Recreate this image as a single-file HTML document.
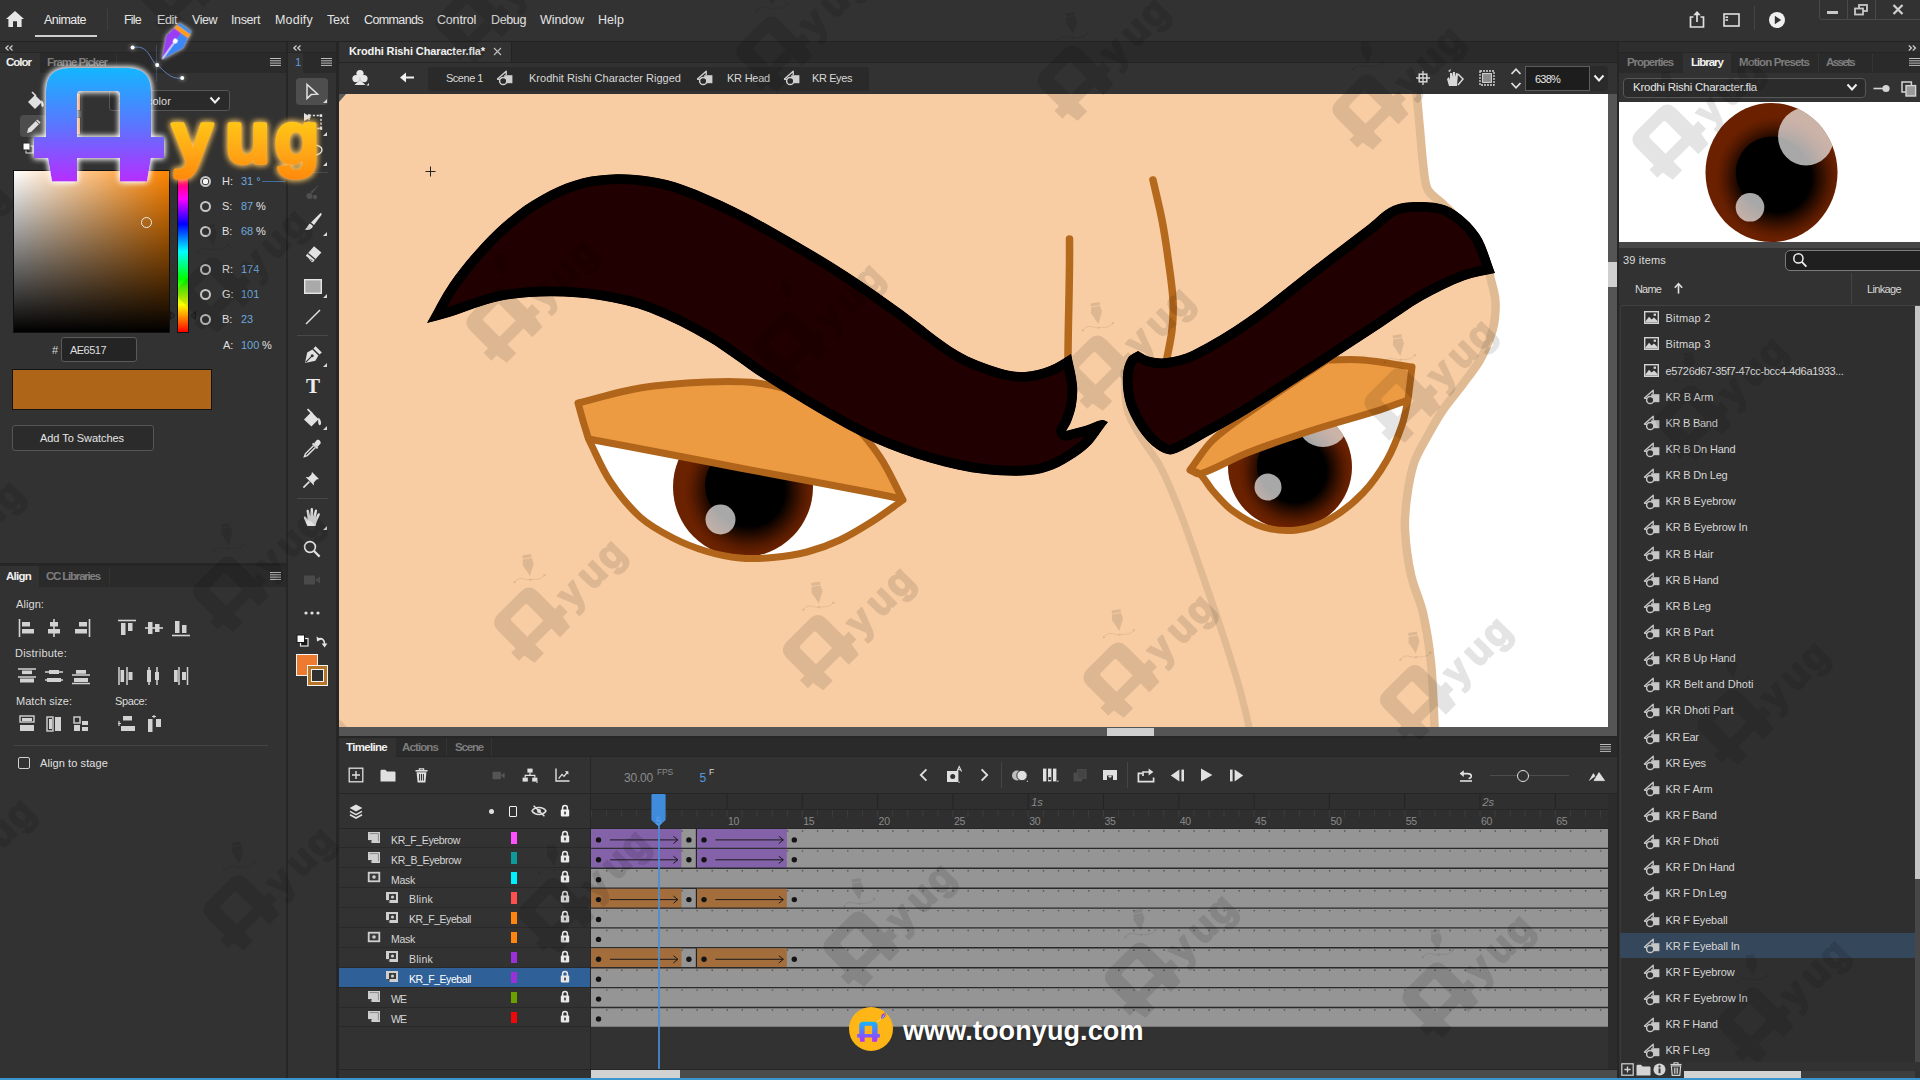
<!DOCTYPE html>
<html lang="en"><head><meta charset="utf-8"><title>Adobe Animate - Krodhi Rishi Character.fla</title>
<style>
html,body{margin:0;padding:0;background:#262626;overflow:hidden}
body{width:1920px;height:1080px;font-family:'Liberation Sans',sans-serif}
#app{position:relative;width:1920px;height:1080px;overflow:hidden;background:#262626}
.t{position:absolute;white-space:nowrap;font-family:'Liberation Sans',sans-serif;display:block}
body>span.t{position:static;display:inline}
.b{position:absolute;box-sizing:border-box}
svg{position:absolute;overflow:visible}
.ico{position:absolute}
</style>
</head>
<body>
<div id="app">
<div class="b" style="left:0;top:0;width:1920px;height:41px;background:#323232"></div>
<div class="b" style="left:0;top:41px;width:1920px;height:1px;background:#222"></div>
<svg class="ico" style="left:5px;top:10px" width="20" height="18" viewBox="0 0 20 18"><path d="M10 1 L19 9 L16.6 9 L16.6 17 L12 17 L12 11.2 L8 11.2 L8 17 L3.4 17 L3.4 9 L1 9 Z" fill="#e6e6e6"/></svg>
<span class="t" style="left:44.0px;top:13.8px;font-size:12.5px;line-height:12.5px;color:#ececec;letter-spacing:-0.551px;">Animate</span>
<div class="b" style="left:35px;top:35px;width:62px;height:2px;background:#cfcfcf"></div>
<div class="b" style="left:107px;top:9px;width:1px;height:21px;background:#3f3f3f"></div>
<span class="t" style="left:124.0px;top:13.8px;font-size:12.5px;line-height:12.5px;color:#e4e4e4;letter-spacing:-0.789px;">File</span>
<span class="t" style="left:157.0px;top:13.8px;font-size:12.5px;line-height:12.5px;color:#e4e4e4;letter-spacing:-0.387px;">Edit</span>
<span class="t" style="left:192.0px;top:13.8px;font-size:12.5px;line-height:12.5px;color:#e4e4e4;letter-spacing:-0.469px;">View</span>
<span class="t" style="left:231.0px;top:13.8px;font-size:12.5px;line-height:12.5px;color:#e4e4e4;letter-spacing:-0.378px;">Insert</span>
<span class="t" style="left:275.0px;top:13.8px;font-size:12.5px;line-height:12.5px;color:#e4e4e4;letter-spacing:0.195px;">Modify</span>
<span class="t" style="left:327.0px;top:13.8px;font-size:12.5px;line-height:12.5px;color:#e4e4e4;letter-spacing:-0.234px;">Text</span>
<span class="t" style="left:364.0px;top:13.8px;font-size:12.5px;line-height:12.5px;color:#e4e4e4;letter-spacing:-0.615px;">Commands</span>
<span class="t" style="left:437.0px;top:13.8px;font-size:12.5px;line-height:12.5px;color:#e4e4e4;letter-spacing:-0.185px;">Control</span>
<span class="t" style="left:491.0px;top:13.8px;font-size:12.5px;line-height:12.5px;color:#e4e4e4;letter-spacing:-0.369px;">Debug</span>
<span class="t" style="left:540.0px;top:13.8px;font-size:12.5px;line-height:12.5px;color:#e4e4e4;letter-spacing:-0.078px;">Window</span>
<span class="t" style="left:598.0px;top:13.8px;font-size:12.5px;line-height:12.5px;color:#e4e4e4;letter-spacing:0.070px;">Help</span>
<svg class="ico" style="left:1688px;top:9px" width="18" height="20" viewBox="0 0 18 20"><path d="M5.5 8 H2.5 V18 H15.5 V8 H12.5" fill="none" stroke="#e0e0e0" stroke-width="1.7"/><path d="M9 13 V3" stroke="#e0e0e0" stroke-width="1.7"/><path d="M5.2 6.2 L9 2 L12.8 6.2 Z" fill="#e0e0e0"/></svg>
<svg class="ico" style="left:1723px;top:13px" width="17" height="14" viewBox="0 0 17 14"><rect x="1" y="1" width="15" height="12" fill="none" stroke="#e0e0e0" stroke-width="1.6"/><rect x="2.5" y="3.4" width="2.6" height="1.6" fill="#e0e0e0"/><rect x="2.5" y="6.2" width="2.6" height="1.6" fill="#e0e0e0"/></svg>
<div class="b" style="left:1754px;top:6px;width:1px;height:24px;background:#444"></div>
<svg class="ico" style="left:1768px;top:11px" width="18" height="18" viewBox="0 0 18 18"><circle cx="9" cy="9" r="8" fill="#f0f0f0"/><path d="M6.8 4.8 L13.2 9 L6.8 13.2 Z" fill="#323232"/></svg>
<div class="b" style="left:1819px;top:-3px;width:104px;height:23px;border:1px solid #4a4a4a;border-radius:3px"></div>
<div class="b" style="left:1847px;top:0;width:1px;height:19px;background:#4a4a4a"></div>
<div class="b" style="left:1875px;top:0;width:1px;height:19px;background:#4a4a4a"></div>
<div class="b" style="left:1827px;top:11px;width:11px;height:3px;background:#c8c8c8"></div>
<svg class="ico" style="left:1854px;top:4px" width="14" height="12" viewBox="0 0 14 12"><rect x="5" y="1" width="8" height="6" fill="none" stroke="#c8c8c8" stroke-width="1.8"/><rect x="1" y="4.5" width="8" height="6" fill="#323232" stroke="#c8c8c8" stroke-width="1.8"/></svg>
<svg class="ico" style="left:1892px;top:4px" width="12" height="11" viewBox="0 0 12 11"><path d="M1.5 1 L10.5 10 M10.5 1 L1.5 10" stroke="#d0d0d0" stroke-width="2.2"/></svg>
<div class="b" style="left:339px;top:42px;width:1278px;height:21px;background:#2a2a2a"></div>
<div class="b" style="left:339px;top:42px;width:173px;height:21px;background:#323232;border-right:1px solid #222"></div>
<span class="t" style="left:349.0px;top:45.5px;font-size:11px;line-height:11px;color:#f2f2f2;font-weight:700;letter-spacing:-0.125px;">Krodhi Rishi Character.fla*</span>
<svg class="ico" style="left:493px;top:47px" width="9" height="9" viewBox="0 0 9 9"><path d="M1 1 L8 8 M8 1 L1 8" stroke="#c0c0c0" stroke-width="1.1"/></svg>
<div class="b" style="left:339px;top:62px;width:1278px;height:32px;background:#323232;border-top:1px solid #242424"></div>
<div class="b" style="left:428px;top:67px;width:441px;height:24px;background:#2a2a2a;border-radius:3px"></div>
<svg class="ico" style="left:351px;top:69px" width="20" height="18" viewBox="0 0 20 18"><circle cx="9" cy="4.6" r="3.6" fill="#e8e8e8"/><circle cx="5" cy="9.6" r="3.6" fill="#e8e8e8"/><circle cx="13" cy="9.6" r="3.6" fill="#e8e8e8"/><path d="M9 8 L9 13 M5.5 15.2 H12.5 L9 12 Z" stroke="#e8e8e8" stroke-width="1.6" fill="#e8e8e8"/><path d="M15.5 16.5 L18 16.5 L18 14 Z" fill="#e8e8e8"/></svg>
<svg class="ico" style="left:399px;top:71px" width="16" height="13" viewBox="0 0 16 13"><path d="M15 6.5 H5" stroke="#f0f0f0" stroke-width="2"/><path d="M1 6.5 L7 1.5 L7 11.5 Z" fill="#f0f0f0"/></svg>
<span class="t" style="left:446.0px;top:72.5px;font-size:11px;line-height:11px;color:#d8d8d8;letter-spacing:-0.482px;">Scene 1</span>
<svg class="ico" style="left:496px;top:70px" width="18" height="16" viewBox="0 0 18 16"><path d="M1.2 9.2 L10.2 1.2 L10.2 5" fill="none" stroke="#cfcfcf" stroke-width="1.4" stroke-linejoin="round"/><rect x="8.2" y="5.2" width="8.2" height="8" fill="#cfcfcf"/><circle cx="7.2" cy="11" r="3.6" fill="#2a2a2a" stroke="#cfcfcf" stroke-width="1.5"/><path d="M1.2 9.2 L4 9.4" stroke="#cfcfcf" stroke-width="1.4"/></svg>
<span class="t" style="left:529.0px;top:72.5px;font-size:11px;line-height:11px;color:#d8d8d8;letter-spacing:0.012px;">Krodhit Rishi Character Rigged</span>
<svg class="ico" style="left:696px;top:70px" width="18" height="16" viewBox="0 0 18 16"><path d="M1.2 9.2 L10.2 1.2 L10.2 5" fill="none" stroke="#cfcfcf" stroke-width="1.4" stroke-linejoin="round"/><rect x="8.2" y="5.2" width="8.2" height="8" fill="#cfcfcf"/><circle cx="7.2" cy="11" r="3.6" fill="#2a2a2a" stroke="#cfcfcf" stroke-width="1.5"/><path d="M1.2 9.2 L4 9.4" stroke="#cfcfcf" stroke-width="1.4"/></svg>
<span class="t" style="left:727.0px;top:72.5px;font-size:11px;line-height:11px;color:#d8d8d8;letter-spacing:-0.234px;">KR Head</span>
<svg class="ico" style="left:783px;top:70px" width="18" height="16" viewBox="0 0 18 16"><path d="M1.2 9.2 L10.2 1.2 L10.2 5" fill="none" stroke="#cfcfcf" stroke-width="1.4" stroke-linejoin="round"/><rect x="8.2" y="5.2" width="8.2" height="8" fill="#cfcfcf"/><circle cx="7.2" cy="11" r="3.6" fill="#2a2a2a" stroke="#cfcfcf" stroke-width="1.5"/><path d="M1.2 9.2 L4 9.4" stroke="#cfcfcf" stroke-width="1.4"/></svg>
<span class="t" style="left:812.0px;top:72.5px;font-size:11px;line-height:11px;color:#d8d8d8;letter-spacing:-0.400px;">KR Eyes</span>
<svg class="ico" style="left:1416px;top:71px" width="14" height="14" viewBox="0 0 14 14"><rect x="3.2" y="3.2" width="7.6" height="7.6" fill="none" stroke="#d8d8d8" stroke-width="1.5"/><path d="M7 0 V14 M0 7 H14" stroke="#d8d8d8" stroke-width="1.3"/></svg>
<svg class="ico" style="left:1445px;top:68px" width="20" height="20" viewBox="0 0 20 20"><path d="M4 18 L2 11 L4 9 L5 12 L5 5 L7 5 L7 9 L8 4 L10 4 L10 9 L11 5 L13 5.5 L12 18 Z" fill="#d8d8d8"/><path d="M13 6 L18 11 L13 17" fill="none" stroke="#d8d8d8" stroke-width="1.5"/><path d="M3 3 L6 1 L5 4 Z" fill="#d8d8d8"/></svg>
<svg class="ico" style="left:1479px;top:70px" width="16" height="16" viewBox="0 0 16 16"><rect x="1" y="1" width="14" height="14" fill="none" stroke="#d8d8d8" stroke-width="1.3" stroke-dasharray="2 1"/><rect x="3.6" y="3.6" width="8.8" height="8.8" fill="#8a8a8a" stroke="#d8d8d8" stroke-width="1"/></svg>
<svg class="ico" style="left:1509px;top:66px" width="14" height="25" viewBox="0 0 14 25"><path d="M2.5 8 L7 3.2 L11.5 8 M2.5 17 L7 21.8 L11.5 17" fill="none" stroke="#e0e0e0" stroke-width="1.8"/></svg>
<div class="b" style="left:1525px;top:66px;width:65px;height:25px;background:#1d1d1d;border:1px solid #5c5c5c"></div>
<span class="t" style="left:1535.0px;top:73.5px;font-size:11px;line-height:11px;color:#e8e8e8;letter-spacing:-0.785px;">638%</span>
<div class="b" style="left:1590px;top:66px;width:18px;height:25px;background:#2a2a2a;border-radius:0 4px 4px 0"></div>
<svg class="ico" style="left:1593px;top:74px" width="12" height="9" viewBox="0 0 12 9"><path d="M1.5 1.5 L6 6.5 L10.5 1.5" fill="none" stroke="#f0f0f0" stroke-width="2"/></svg>
<div class="b" style="left:1608px;top:94px;width:9px;height:642px;background:#555555"></div>
<div class="b" style="left:339px;top:727px;width:1278px;height:9px;background:#555555"></div>
<div class="b" style="left:1608px;top:262px;width:9px;height:25px;background:#cfcfcf"></div>
<div class="b" style="left:1107px;top:728px;width:47px;height:8px;background:#cfcfcf"></div><div class="b" style="left:0;top:42px;width:286px;height:1038px;background:#323232"></div>
<div class="b" style="left:0;top:42px;width:286px;height:11px;background:#2e2e2e;border-bottom:1px solid #262626"></div>
<svg class="ico" style="left:5px;top:45px" width="9" height="6" viewBox="0 0 9 6"><path d="M3.5 0.5 L0.8 3 L3.5 5.5 M7.5 0.5 L4.8 3 L7.5 5.5" fill="none" stroke="#d0d0d0" stroke-width="1.2"/></svg>
<div class="b" style="left:0;top:53px;width:286px;height:20px;background:#2a2a2a"></div>
<div class="b" style="left:0;top:53px;width:40px;height:20px;background:#323232"></div>
<div class="b" style="left:116px;top:54px;width:1px;height:18px;background:#333"></div>
<span class="t" style="left:6.0px;top:57.2px;font-size:11.5px;line-height:11.5px;color:#f0f0f0;font-weight:700;letter-spacing:-1.006px;">Color</span>
<span class="t" style="left:47.0px;top:57.2px;font-size:11.5px;line-height:11.5px;color:#7f7f7f;font-weight:700;letter-spacing:-1.021px;">Frame Picker</span>
<svg class="ico" style="left:270px;top:58px" width="11" height="8" viewBox="0 0 11 8"><path d="M0 0.5 H11 M0 2.8 H11 M0 5.1 H11 M0 7.4 H11" stroke="#bdbdbd" stroke-width="1"/></svg>
<svg class="ico" style="left:25px;top:91px" width="20" height="20" viewBox="0 0 20 20"><path d="M3 11 L10 4 L17 11 L10 18 Z" fill="#e0e0e0"/><path d="M7 1 L11 5" stroke="#e0e0e0" stroke-width="1.6"/><path d="M16.5 9 C19.5 12 19 16 17.6 16 C16 16 16 12 16.5 9Z" fill="#e0e0e0"/></svg>
<div class="b" style="left:20px;top:115px;width:27px;height:22px;background:#4d4d4d;border-radius:4px"></div>
<svg class="ico" style="left:25px;top:117px" width="18" height="18" viewBox="0 0 18 18"><path d="M2 16 L3.2 11.6 L12.4 2.4 L15.6 5.6 L6.4 14.8 Z" fill="#e0e0e0"/><path d="M11 3.8 L14.2 7" stroke="#4d4d4d" stroke-width="1"/></svg>
<svg class="ico" style="left:22px;top:142px" width="12" height="12" viewBox="0 0 12 12"><rect x="4" y="4" width="7" height="7" fill="#222" stroke="#ddd" stroke-width="1"/><rect x="1" y="1" width="7" height="7" fill="#fff" stroke="#222" stroke-width="1"/></svg>
<div class="b" style="left:57px;top:93px;width:24px;height:18px;background:#ee7a30;border:1px solid #111"></div>
<div class="b" style="left:57px;top:117px;width:24px;height:18px;background:#ee8a38;border:1px solid #111"></div>
<div class="b" style="left:109px;top:90px;width:121px;height:21px;background:#2a2a2a;border:1px solid #555;border-radius:3px"></div>
<span class="t" style="left:119.0px;top:95.5px;font-size:11px;line-height:11px;color:#dcdcdc;letter-spacing:0.058px;">Solid color</span>
<svg class="ico" style="left:209px;top:96px" width="12" height="9" viewBox="0 0 12 9"><path d="M1.5 1.5 L6 6.5 L10.5 1.5" fill="none" stroke="#f0f0f0" stroke-width="2"/></svg>
<div class="b" style="left:13px;top:170px;width:157px;height:163px;border:1px solid #111;background:linear-gradient(to top,#000 0%,rgba(0,0,0,0) 100%),linear-gradient(to right,#fff 0%,#ff8400 100%)"></div>
<div class="b" style="left:141px;top:217px;width:11px;height:11px;border:1.5px solid #ececec;border-radius:50%"></div>
<div class="b" style="left:177px;top:170px;width:12px;height:163px;border:1px solid #111;background:linear-gradient(to bottom,#f00 0%,#f0f 17%,#00f 33%,#0ff 50%,#0f0 67%,#ff0 83%,#f00 100%)"></div>
<svg class="ico" style="left:170px;top:311px" width="26" height="9" viewBox="0 0 26 9"><path d="M0.5 0.5 L5 4.5 L0.5 8.5 Z M25.5 0.5 L21 4.5 L25.5 8.5 Z" fill="#2a2a2a" stroke="#1a1a1a" stroke-width="1"/></svg>
<div class="b" style="left:200px;top:175.5px;width:11px;height:11px;border:2px solid #c6c6c6;border-radius:50%;background:radial-gradient(circle,#f4f4f4 0 2.6px,rgba(0,0,0,0) 3px)"></div>
<span class="t" style="left:222.0px;top:175.5px;font-size:11px;line-height:11px;color:#e0e0e0;">H:</span>
<span class="t" style="left:241.0px;top:175.5px;font-size:11px;line-height:11px;color:#6ea8dc;">31 °</span>
<div class="b" style="left:200px;top:201.0px;width:11px;height:11px;border:2px solid #c6c6c6;border-radius:50%"></div>
<span class="t" style="left:222.0px;top:201.0px;font-size:11px;line-height:11px;color:#e0e0e0;">S:</span>
<span class="t" style="left:241.0px;top:201.0px;font-size:11px;line-height:11px;color:#6ea8dc;">87</span>
<div class="b" style="left:200px;top:226.0px;width:11px;height:11px;border:2px solid #c6c6c6;border-radius:50%"></div>
<span class="t" style="left:222.0px;top:226.0px;font-size:11px;line-height:11px;color:#e0e0e0;">B:</span>
<span class="t" style="left:241.0px;top:226.0px;font-size:11px;line-height:11px;color:#6ea8dc;">68</span>
<div class="b" style="left:200px;top:263.5px;width:11px;height:11px;border:2px solid #c6c6c6;border-radius:50%"></div>
<span class="t" style="left:222.0px;top:263.5px;font-size:11px;line-height:11px;color:#e0e0e0;">R:</span>
<span class="t" style="left:241.0px;top:263.5px;font-size:11px;line-height:11px;color:#6ea8dc;">174</span>
<div class="b" style="left:200px;top:289.0px;width:11px;height:11px;border:2px solid #c6c6c6;border-radius:50%"></div>
<span class="t" style="left:222.0px;top:289.0px;font-size:11px;line-height:11px;color:#e0e0e0;">G:</span>
<span class="t" style="left:241.0px;top:289.0px;font-size:11px;line-height:11px;color:#6ea8dc;">101</span>
<div class="b" style="left:200px;top:314.0px;width:11px;height:11px;border:2px solid #c6c6c6;border-radius:50%"></div>
<span class="t" style="left:222.0px;top:314.0px;font-size:11px;line-height:11px;color:#e0e0e0;">B:</span>
<span class="t" style="left:241.0px;top:314.0px;font-size:11px;line-height:11px;color:#6ea8dc;">23</span>
<div class="b" style="left:262px;top:180.5px;width:23px;height:1px;background:#3f6ea0"></div>
<span class="t" style="left:256.0px;top:201.0px;font-size:11px;line-height:11px;color:#e0e0e0;">%</span>
<span class="t" style="left:256.0px;top:226.0px;font-size:11px;line-height:11px;color:#e0e0e0;">%</span>
<span class="t" style="left:223.0px;top:340.0px;font-size:11px;line-height:11px;color:#e0e0e0;">A:</span>
<span class="t" style="left:241.0px;top:340.0px;font-size:11px;line-height:11px;color:#6ea8dc;">100</span>
<span class="t" style="left:262.0px;top:340.0px;font-size:11px;line-height:11px;color:#e0e0e0;">%</span>
<span class="t" style="left:52.0px;top:344.5px;font-size:11px;line-height:11px;color:#d8d8d8;">#</span>
<div class="b" style="left:61px;top:337px;width:76px;height:25px;background:#242424;border:1px solid #5a5a5a;border-radius:3px"></div>
<span class="t" style="left:70.0px;top:344.5px;font-size:11px;line-height:11px;color:#dedede;letter-spacing:-0.526px;">AE6517</span>
<div class="b" style="left:12px;top:369px;width:200px;height:41px;background:#ae6517;border:1.5px solid #141414"></div>
<div class="b" style="left:12px;top:425px;width:142px;height:26px;background:#2b2b2b;border:1px solid #565656;border-radius:3px"></div>
<span class="t" style="left:40.0px;top:432.5px;font-size:11px;line-height:11px;color:#e4e4e4;letter-spacing:-0.053px;">Add To Swatches</span>
<div class="b" style="left:0;top:563px;width:286px;height:3px;background:#262626"></div>
<div class="b" style="left:0;top:566px;width:286px;height:21px;background:#2a2a2a"></div>
<div class="b" style="left:0;top:566px;width:39px;height:21px;background:#323232"></div>
<div class="b" style="left:109px;top:567px;width:1px;height:19px;background:#333"></div>
<span class="t" style="left:6.0px;top:571.2px;font-size:11.5px;line-height:11.5px;color:#f0f0f0;font-weight:700;letter-spacing:-0.750px;">Align</span>
<span class="t" style="left:46.0px;top:571.2px;font-size:11.5px;line-height:11.5px;color:#7f7f7f;font-weight:700;letter-spacing:-1.199px;">CC Libraries</span>
<svg class="ico" style="left:270px;top:572px" width="11" height="8" viewBox="0 0 11 8"><path d="M0 0.5 H11 M0 2.8 H11 M0 5.1 H11 M0 7.4 H11" stroke="#bdbdbd" stroke-width="1"/></svg>
<span class="t" style="left:16.0px;top:598.5px;font-size:11px;line-height:11px;color:#dcdcdc;letter-spacing:0.078px;">Align:</span>
<svg class="ico" style="left:18px;top:619px" width="18" height="18" viewBox="0 0 18 18"><path d="M1.5 0 V18" stroke="#d2d2d2" stroke-width="1.6"/><rect x="4" y="3" width="8" height="4.5" fill="#d2d2d2"/><rect x="4" y="10" width="12" height="4.5" fill="#d2d2d2"/></svg>
<svg class="ico" style="left:45px;top:619px" width="18" height="18" viewBox="0 0 18 18"><path d="M9 0 V18" stroke="#d2d2d2" stroke-width="1.6"/><rect x="5" y="3" width="8" height="4.5" fill="#d2d2d2"/><rect x="3" y="10" width="12" height="4.5" fill="#d2d2d2"/></svg>
<svg class="ico" style="left:73px;top:619px" width="18" height="18" viewBox="0 0 18 18"><path d="M16.5 0 V18" stroke="#d2d2d2" stroke-width="1.6"/><rect x="6" y="3" width="8" height="4.5" fill="#d2d2d2"/><rect x="2" y="10" width="12" height="4.5" fill="#d2d2d2"/></svg>
<svg class="ico" style="left:118px;top:619px" width="18" height="18" viewBox="0 0 18 18"><path d="M0 1.5 H18" stroke="#d2d2d2" stroke-width="1.6"/><rect x="3" y="4" width="4.5" height="12" fill="#d2d2d2"/><rect x="10" y="4" width="4.5" height="8" fill="#d2d2d2"/></svg>
<svg class="ico" style="left:145px;top:619px" width="18" height="18" viewBox="0 0 18 18"><path d="M0 9 H18" stroke="#d2d2d2" stroke-width="1.6"/><rect x="3" y="3" width="4.5" height="12" fill="#d2d2d2"/><rect x="10" y="5" width="4.5" height="8" fill="#d2d2d2"/></svg>
<svg class="ico" style="left:172px;top:619px" width="18" height="18" viewBox="0 0 18 18"><path d="M0 16.5 H18" stroke="#d2d2d2" stroke-width="1.6"/><rect x="3" y="2" width="4.5" height="12" fill="#d2d2d2"/><rect x="10" y="6" width="4.5" height="8" fill="#d2d2d2"/></svg>
<span class="t" style="left:15.0px;top:647.5px;font-size:11px;line-height:11px;color:#dcdcdc;letter-spacing:0.224px;">Distribute:</span>
<svg class="ico" style="left:18px;top:667px" width="18" height="18" viewBox="0 0 18 18"><path d="M0 2 H18 M0 10 H18" stroke="#d2d2d2" stroke-width="1.5"/><rect x="4" y="3.5" width="10" height="3.6" fill="#d2d2d2"/><rect x="2" y="11.5" width="14" height="4" fill="#d2d2d2"/></svg>
<svg class="ico" style="left:45px;top:667px" width="18" height="18" viewBox="0 0 18 18"><path d="M0 5 H18 M0 13 H18" stroke="#d2d2d2" stroke-width="1.5"/><rect x="4" y="3" width="10" height="4" fill="#d2d2d2"/><rect x="2" y="11" width="14" height="4" fill="#d2d2d2"/></svg>
<svg class="ico" style="left:72px;top:667px" width="18" height="18" viewBox="0 0 18 18"><path d="M0 8 H18 M0 16.5 H18" stroke="#d2d2d2" stroke-width="1.5"/><rect x="4" y="3" width="10" height="3.8" fill="#d2d2d2"/><rect x="2" y="11" width="14" height="4" fill="#d2d2d2"/></svg>
<svg class="ico" style="left:117px;top:667px" width="18" height="18" viewBox="0 0 18 18"><path d="M2 0 V18 M10 0 V18" stroke="#d2d2d2" stroke-width="1.5"/><rect x="3.5" y="3" width="3.6" height="12" fill="#d2d2d2"/><rect x="11.5" y="5" width="4" height="8" fill="#d2d2d2"/></svg>
<svg class="ico" style="left:144px;top:667px" width="18" height="18" viewBox="0 0 18 18"><path d="M5 0 V18 M13 0 V18" stroke="#d2d2d2" stroke-width="1.5"/><rect x="3" y="3" width="4" height="12" fill="#d2d2d2"/><rect x="11" y="5" width="4" height="8" fill="#d2d2d2"/></svg>
<svg class="ico" style="left:171px;top:667px" width="18" height="18" viewBox="0 0 18 18"><path d="M8 0 V18 M16.5 0 V18" stroke="#d2d2d2" stroke-width="1.5"/><rect x="3" y="3" width="3.8" height="12" fill="#d2d2d2"/><rect x="11" y="5" width="4" height="8" fill="#d2d2d2"/></svg>
<span class="t" style="left:16.0px;top:695.5px;font-size:11px;line-height:11px;color:#dcdcdc;letter-spacing:0.033px;">Match size:</span>
<span class="t" style="left:115.0px;top:695.5px;font-size:11px;line-height:11px;color:#dcdcdc;letter-spacing:-0.375px;">Space:</span>
<svg class="ico" style="left:18px;top:715px" width="18" height="18" viewBox="0 0 18 18"><rect x="2" y="1" width="14" height="6" fill="none" stroke="#d2d2d2" stroke-width="1.4"/><rect x="4" y="3" width="10" height="3" fill="#d2d2d2"/><rect x="2" y="10" width="14" height="6" fill="#d2d2d2"/></svg>
<svg class="ico" style="left:45px;top:715px" width="18" height="18" viewBox="0 0 18 18"><rect x="2" y="2" width="6" height="14" fill="none" stroke="#d2d2d2" stroke-width="1.4"/><rect x="4" y="4" width="3" height="10" fill="#d2d2d2"/><rect x="10" y="2" width="6" height="14" fill="#d2d2d2"/></svg>
<svg class="ico" style="left:72px;top:715px" width="18" height="18" viewBox="0 0 18 18"><rect x="2" y="2" width="6" height="6" fill="none" stroke="#d2d2d2" stroke-width="1.4"/><rect x="2" y="10" width="6" height="6" fill="#d2d2d2"/><rect x="10" y="6" width="6" height="4" fill="#d2d2d2"/><rect x="10" y="12" width="6" height="4" fill="#d2d2d2"/></svg>
<svg class="ico" style="left:118px;top:715px" width="18" height="18" viewBox="0 0 18 18"><rect x="5" y="1" width="9" height="4.5" fill="#d2d2d2"/><rect x="3" y="11" width="14" height="5" fill="#d2d2d2"/><path d="M1 6 V11 M0 8.5 H3" stroke="#d2d2d2" stroke-width="1.2"/></svg>
<svg class="ico" style="left:145px;top:715px" width="18" height="18" viewBox="0 0 18 18"><rect x="3" y="4" width="4.5" height="13" fill="#d2d2d2"/><rect x="11" y="4" width="5" height="8" fill="#d2d2d2"/><path d="M7 1.5 H11 M9 0 V3" stroke="#d2d2d2" stroke-width="1.2"/></svg>
<div class="b" style="left:14px;top:745px;width:254px;height:1px;background:#454545"></div>
<div class="b" style="left:18px;top:757px;width:12px;height:12px;border:1.5px solid #d0d0d0;border-radius:2px"></div>
<span class="t" style="left:40.0px;top:757.5px;font-size:11px;line-height:11px;color:#e0e0e0;letter-spacing:0.096px;">Align to stage</span><div class="b" style="left:288px;top:42px;width:48px;height:1038px;background:#323232"></div>
<div class="b" style="left:288px;top:42px;width:48px;height:11px;background:#2e2e2e;border-bottom:1px solid #262626"></div>
<svg class="ico" style="left:293px;top:45px" width="9" height="6" viewBox="0 0 9 6"><path d="M3.5 0.5 L0.8 3 L3.5 5.5 M7.5 0.5 L4.8 3 L7.5 5.5" fill="none" stroke="#d0d0d0" stroke-width="1.2"/></svg>
<div class="b" style="left:288px;top:53px;width:48px;height:20px;background:#2a2a2a"></div>
<div class="b" style="left:288px;top:53px;width:15px;height:20px;background:#323232"></div>
<span class="t" style="left:295.0px;top:57.2px;font-size:11.5px;line-height:11.5px;color:#5b9bd5;">1</span>
<svg class="ico" style="left:321px;top:58px" width="11" height="8" viewBox="0 0 11 8"><path d="M0 0.5 H11 M0 2.8 H11 M0 5.1 H11 M0 7.4 H11" stroke="#bdbdbd" stroke-width="1"/></svg>
<div class="b" style="left:296px;top:78px;width:32px;height:27px;background:#4e4e4e;border-radius:4px"></div>
<svg class="ico" style="left:304.0px;top:83.0px" width="16" height="18" viewBox="0 0 16 18"><path d="M3 1.5 L3 15.5 L7.2 11.6 L13.6 11.2 Z" fill="none" stroke="#e2e2e2" stroke-width="1.5" stroke-linejoin="miter"/></svg>
<svg class="ico" style="left:323px;top:99px" width="4" height="4" viewBox="0 0 4 4"><path d="M4 0 V4 H0 Z" fill="#d8d8d8"/></svg>
<svg class="ico" style="left:303.0px;top:112.0px" width="20" height="20" viewBox="0 0 20 20"><path d="M1 1 L1 9 L8 5.6 Z" fill="#e2e2e2"/><rect x="6" y="3.5" width="12" height="13" fill="none" stroke="#e2e2e2" stroke-width="1.3" stroke-dasharray="2.2 1.6"/><rect x="4.8" y="2.3" width="2.6" height="2.6" fill="#e2e2e2"/><rect x="16.6" y="2.3" width="2.6" height="2.6" fill="#e2e2e2"/><rect x="4.8" y="15.2" width="2.6" height="2.6" fill="#e2e2e2"/><rect x="16.6" y="15.2" width="2.6" height="2.6" fill="#e2e2e2"/></svg>
<svg class="ico" style="left:323px;top:132px" width="4" height="4" viewBox="0 0 4 4"><path d="M4 0 V4 H0 Z" fill="#d8d8d8"/></svg>
<svg class="ico" style="left:304.0px;top:143.0px" width="20" height="18" viewBox="0 0 20 18"><ellipse cx="10" cy="7" rx="8" ry="5" fill="none" stroke="#e2e2e2" stroke-width="1.4"/><path d="M5 11 C3 13 5 16 3 17" fill="none" stroke="#e2e2e2" stroke-width="1.4"/></svg>
<svg class="ico" style="left:323px;top:162px" width="4" height="4" viewBox="0 0 4 4"><path d="M4 0 V4 H0 Z" fill="#d8d8d8"/></svg>
<div class="b" style="left:297px;top:172px;width:31px;height:1px;background:#484848"></div>
<svg class="ico" style="left:304.0px;top:183.0px" width="18" height="18" viewBox="0 0 18 18"><path d="M15 1.5 L8 10.5 L6.5 9 Z" fill="#505050"/><circle cx="5.5" cy="13" r="3" fill="#505050"/><circle cx="11" cy="14" r="2.2" fill="#505050"/></svg>
<svg class="ico" style="left:303.0px;top:212.0px" width="20" height="20" viewBox="0 0 20 20"><path d="M17.5 1 C18.6 1 19 2 18.4 3 L11 13 L8 10.4 Z" fill="#e2e2e2"/><path d="M7 11.4 L10 14 C9 17.6 5 18.8 1.4 17.6 C4 16.6 4.4 13 7 11.4Z" fill="#e2e2e2"/></svg>
<svg class="ico" style="left:323px;top:232px" width="4" height="4" viewBox="0 0 4 4"><path d="M4 0 V4 H0 Z" fill="#d8d8d8"/></svg>
<svg class="ico" style="left:303.0px;top:245.0px" width="20" height="18" viewBox="0 0 20 18"><path d="M11 1.2 L18.4 7.4 L10.4 16.6 L3 10.4 Z" fill="#e2e2e2"/><path d="M5 8.4 L12.2 14.4" stroke="#323232" stroke-width="1.3"/><path d="M3 10.4 L5.6 12.6 L8.6 16.6 L10.4 16.6" fill="#323232" stroke="#e2e2e2" stroke-width="1"/></svg>
<svg class="ico" style="left:303.5px;top:278.5px" width="18" height="15" viewBox="0 0 18 15"><rect x="0.7" y="0.7" width="16.6" height="13.6" fill="#a9a9a9" stroke="#e4e4e4" stroke-width="1.4"/></svg>
<svg class="ico" style="left:323px;top:294px" width="4" height="4" viewBox="0 0 4 4"><path d="M4 0 V4 H0 Z" fill="#d8d8d8"/></svg>
<svg class="ico" style="left:305.0px;top:309.0px" width="16" height="16" viewBox="0 0 16 16"><path d="M1 15 L15 1" stroke="#e2e2e2" stroke-width="1.4"/></svg>
<div class="b" style="left:297px;top:335px;width:31px;height:1px;background:#484848"></div>
<svg class="ico" style="left:303.0px;top:345.0px" width="20" height="20" viewBox="0 0 20 20"><path d="M12.6 1.2 L18.8 7.4 L16.6 9.6 L10.4 3.4 Z" fill="#e2e2e2"/><path d="M9.4 4.6 L15.4 10.6 L12.4 15.8 L2 18 L4.2 7.6 Z" fill="#e2e2e2"/><path d="M2.6 17.4 L8.6 11.4" stroke="#323232" stroke-width="1.2"/><circle cx="9.2" cy="10.8" r="1.5" fill="#323232"/></svg>
<svg class="ico" style="left:323px;top:363px" width="4" height="4" viewBox="0 0 4 4"><path d="M4 0 V4 H0 Z" fill="#d8d8d8"/></svg>
<span class="t" style="left:306.0px;top:376.0px;font-size:21px;line-height:21px;color:#ececec;font-weight:700;font-family:'Liberation Serif',serif;">T</span>
<svg class="ico" style="left:301.0px;top:408.0px" width="22" height="20" viewBox="0 0 22 20"><path d="M3 11.5 L10.4 4 L17.6 11.2 L10.4 18.6 Z" fill="#e2e2e2"/><path d="M6.5 1.2 L11.6 6.2" stroke="#e2e2e2" stroke-width="1.7"/><path d="M17.4 9.6 C21 13 20.4 17.2 18.8 17.2 C17 17.2 16.8 13 17.4 9.6Z" fill="#e2e2e2"/></svg>
<svg class="ico" style="left:323px;top:426px" width="4" height="4" viewBox="0 0 4 4"><path d="M4 0 V4 H0 Z" fill="#d8d8d8"/></svg>
<svg class="ico" style="left:302.0px;top:439.0px" width="20" height="20" viewBox="0 0 20 20"><path d="M14.6 1.2 C16.6 -0.2 19.6 2.6 18.4 4.8 L15.4 8 L12 4.6 Z" fill="#e2e2e2"/><path d="M10.6 4.4 L15.6 9.4" stroke="#e2e2e2" stroke-width="1.8"/><path d="M11.6 6.6 L3.4 14.8 L2.4 17.6 L5.2 16.6 L13.4 8.4" fill="none" stroke="#e2e2e2" stroke-width="1.4"/></svg>
<svg class="ico" style="left:302.0px;top:471.0px" width="18" height="18" viewBox="0 0 18 18"><path d="M10 1 L17 8 L14.6 8.6 L11.8 11.4 L12 14.4 L3.6 6 L6.6 6.2 L9.4 3.4 Z" fill="#e2e2e2"/><path d="M7.4 10.6 L1.4 16.6" stroke="#e2e2e2" stroke-width="1.6"/></svg>
<div class="b" style="left:297px;top:498px;width:31px;height:1px;background:#484848"></div>
<svg class="ico" style="left:302.0px;top:507.0px" width="20" height="20" viewBox="0 0 20 20"><path d="M5.4 19 L2 11.4 C1.2 9.6 3.2 8.8 4.2 10.4 L5.6 12.6 L4.6 4.2 C4.4 2.4 6.6 2.2 7 4 L8.2 9.6 L8.6 2.4 C8.7 0.6 11 0.6 11 2.4 L11.2 9.6 L12.8 3.4 C13.2 1.8 15.4 2.4 15 4 L13.8 10.4 L15.8 6.8 C16.6 5.4 18.4 6.4 17.8 7.8 L14.4 15.6 L13.6 19 Z" fill="#e2e2e2"/></svg>
<svg class="ico" style="left:323px;top:526px" width="4" height="4" viewBox="0 0 4 4"><path d="M4 0 V4 H0 Z" fill="#d8d8d8"/></svg>
<svg class="ico" style="left:303.0px;top:540.0px" width="18" height="18" viewBox="0 0 18 18"><circle cx="7" cy="7" r="5.4" fill="none" stroke="#e2e2e2" stroke-width="1.6"/><path d="M11 11 L16.6 16.6" stroke="#e2e2e2" stroke-width="2.2"/></svg>
<svg class="ico" style="left:303.0px;top:574.0px" width="18" height="12" viewBox="0 0 18 12"><rect x="1" y="1.5" width="11" height="9" rx="1.2" fill="#4a4a4a"/><path d="M12 6 L17 2.4 V9.6 Z" fill="#4a4a4a"/></svg>
<svg class="ico" style="left:304.0px;top:611.0px" width="16" height="4" viewBox="0 0 16 4"><circle cx="2" cy="2" r="1.6" fill="#e2e2e2"/><circle cx="8" cy="2" r="1.6" fill="#e2e2e2"/><circle cx="14" cy="2" r="1.6" fill="#e2e2e2"/></svg>
<svg class="ico" style="left:296.0px;top:633.5px" width="13" height="13" viewBox="0 0 13 13"><rect x="4.5" y="4.5" width="7.5" height="7.5" fill="#1a1a1a" stroke="#e6e6e6" stroke-width="1.2"/><rect x="1" y="1" width="7.5" height="7.5" fill="#fff" stroke="#1a1a1a" stroke-width="1"/></svg>
<svg class="ico" style="left:315.5px;top:634.5px" width="12" height="13" viewBox="0 0 12 13"><path d="M2 4.2 C6 2.6 9 5 8.6 9.4" fill="none" stroke="#e2e2e2" stroke-width="1.6"/><path d="M0.6 1.4 L1 6.6 L5.2 4.4 Z" fill="#e2e2e2"/><path d="M5.6 8.6 L11.4 8.6 L8.6 12.6 Z" fill="#e2e2e2"/></svg>
<div class="b" style="left:296px;top:654px;width:22px;height:22px;background:#ee7a30;border:1px solid #f4f4f4"></div>
<div class="b" style="left:307px;top:665px;width:21px;height:21px;background:#b77528;border:1px solid #f4f4f4"></div>
<div class="b" style="left:311px;top:669px;width:13px;height:13px;background:#303030;border:1.5px solid #f4f4f4"></div>
<svg style="left:339px;top:94px;overflow:hidden" width="1269" height="633" viewBox="339 94 1269 633">
<defs>
<clipPath id="clb"><path d="M427.0 323.0C434.7 309.7 441.2 295.6 450.0 283.0C459.9 268.8 471.1 255.2 483.0 242.5C493.4 231.4 504.7 221.0 516.7 211.7C527.0 203.7 538.4 196.7 550.0 190.8C560.5 185.5 571.7 181.1 583.0 178.3C593.9 175.6 605.4 174.5 616.7 174.2C627.8 173.9 639.1 174.9 650.0 176.7C661.2 178.5 672.4 181.1 683.0 185.0C700.9 191.5 718.5 199.4 735.6 207.8C754.5 217.1 772.8 227.5 791.0 238.0C809.8 248.8 828.5 259.9 846.7 271.7C865.5 283.9 883.8 297.0 902.0 310.0C920.8 323.4 938.1 339.3 957.8 351.0C970.8 358.8 985.6 364.0 1000.0 368.5C1008.0 371.0 1016.7 372.4 1025.0 372.0C1033.4 371.6 1042.1 369.1 1050.0 366.0C1057.4 363.1 1064.0 358.0 1071.0 354.0C1073.0 364.3 1076.0 374.6 1077.0 385.0C1077.6 391.6 1077.1 398.5 1076.0 405.0C1075.1 410.8 1073.1 416.5 1071.0 422.0C1069.8 425.2 1067.7 428.0 1066.0 431.0C1072.3 429.3 1078.7 427.9 1085.0 426.0C1090.7 424.2 1096.3 421.0 1102.0 420.0C1104.0 419.7 1106.0 421.3 1108.0 422.0C1100.3 431.3 1094.4 442.8 1085.0 450.0C1072.4 459.8 1057.4 469.3 1042.0 473.0C1024.2 477.3 1004.2 475.7 985.6 474.0C966.9 472.2 948.2 467.6 930.0 462.5C911.1 457.1 892.3 450.5 874.4 442.5C855.3 434.0 837.1 423.4 819.0 413.0C800.0 402.1 781.4 390.5 763.0 378.6C744.3 366.5 727.0 352.2 707.8 341.0C689.3 330.2 670.0 320.1 650.0 312.5C634.0 306.4 616.9 302.7 600.0 300.0C583.6 297.3 566.7 296.2 550.0 296.3C533.3 296.4 516.3 297.5 500.0 300.8C483.0 304.3 466.7 311.6 450.0 316.7C442.4 319.0 434.7 320.9 427.0 323.0Z"/></clipPath>
<clipPath id="crb"><path d="M1138.0 351.0C1142.0 353.0 1145.7 356.0 1150.0 357.0C1155.4 358.3 1161.5 358.8 1167.0 358.0C1175.5 356.8 1184.3 354.8 1192.0 351.0C1211.0 341.5 1229.5 330.2 1247.0 318.0C1269.8 302.2 1291.0 283.9 1313.0 267.0C1331.3 252.9 1349.7 239.0 1368.0 225.0C1376.3 218.7 1383.7 209.9 1393.0 206.0C1402.0 202.2 1413.1 201.7 1423.0 202.0C1432.4 202.3 1443.0 203.4 1451.0 208.0C1461.7 214.1 1472.0 223.7 1479.0 234.0C1486.7 245.4 1489.7 260.0 1495.0 273.0C1485.0 275.3 1474.6 276.4 1465.0 280.0C1450.6 285.4 1436.5 292.4 1423.0 300.0C1408.8 308.0 1395.7 318.0 1382.0 327.0C1359.0 342.0 1336.1 357.1 1313.0 372.0C1291.1 386.1 1269.3 400.4 1247.0 414.0C1234.3 421.8 1221.1 428.9 1208.0 436.0C1196.5 442.2 1184.9 450.3 1173.0 454.0C1168.9 455.3 1163.8 453.1 1160.0 451.0C1154.4 447.8 1149.3 442.9 1145.0 438.0C1140.3 432.6 1136.3 426.3 1133.0 420.0C1129.7 413.7 1126.5 406.9 1125.0 400.0C1123.2 391.9 1122.4 383.2 1123.0 375.0C1123.4 369.2 1125.0 362.7 1128.0 358.0C1130.0 354.7 1134.7 353.3 1138.0 351.0Z"/></clipPath>
<clipPath id="cle"><path d="M578.0 403.0C598.7 398.0 619.1 391.4 640.0 388.0C662.1 384.4 684.6 383.0 707.0 382.0C723.6 381.3 740.6 380.9 757.0 383.0C771.6 384.9 786.5 388.3 800.0 394.0C817.5 401.3 835.2 410.4 850.0 422.0C861.9 431.4 871.4 444.4 880.0 457.0C889.1 470.4 895.3 485.7 903.0 500.0C893.0 507.0 883.3 514.5 873.0 521.0C862.3 527.8 851.4 534.6 840.0 540.0C829.4 545.0 818.3 549.1 807.0 552.0C795.9 554.9 784.4 556.5 773.0 557.5C762.1 558.5 750.9 559.0 740.0 558.0C728.9 557.0 717.7 554.7 707.0 551.5C695.4 548.0 683.8 543.6 673.0 538.0C661.5 532.1 649.6 525.6 640.0 517.0C628.6 506.6 618.6 494.0 610.0 481.0C601.4 468.0 595.7 453.0 588.5 439.0C586.7 433.0 584.8 427.0 583.0 421.0C581.3 415.0 579.7 409.0 578.0 403.0Z"/></clipPath>
<clipPath id="cre"><path d="M1190.0 470.0C1197.7 460.0 1203.9 448.5 1213.0 440.0C1227.2 426.8 1244.0 416.2 1260.0 405.0C1282.0 389.6 1304.7 375.0 1327.0 360.0C1339.0 360.0 1351.1 359.0 1363.0 360.0C1379.4 361.4 1395.7 364.7 1412.0 367.0C1410.7 378.0 1409.3 389.0 1408.0 400.0C1406.0 408.3 1404.8 416.9 1402.0 425.0C1397.8 436.9 1393.3 449.1 1387.0 460.0C1380.3 471.7 1372.4 483.3 1363.0 493.0C1353.4 503.0 1342.0 512.3 1330.0 519.0C1320.0 524.6 1308.3 528.7 1297.0 530.0C1285.9 531.3 1273.7 530.2 1263.0 527.0C1252.4 523.8 1242.1 517.6 1233.0 511.0C1225.4 505.6 1219.3 498.0 1213.0 491.0C1208.3 485.7 1205.1 478.7 1200.0 474.0C1197.4 471.7 1193.3 471.3 1190.0 470.0Z"/></clipPath>
<radialGradient id="iris" cx="0.5" cy="0.5" r="0.5">
<stop offset="0" stop-color="#000" stop-opacity="1"/><stop offset="0.55" stop-color="#000" stop-opacity="1"/>
<stop offset="0.76" stop-color="#0c0200" stop-opacity="0.5"/><stop offset="1" stop-color="#3a1000" stop-opacity="0"/></radialGradient>
<clipPath id="cil"><circle cx="743" cy="487" r="70"/></clipPath><clipPath id="cir"><circle cx="1290" cy="467" r="62"/></clipPath>
</defs>
<rect x="339" y="94" width="1269" height="633" fill="#ffffff"/>
<path d="M339 94 L1416 86C1417.3 100.7 1418.6 115.3 1420.0 130.0C1421.3 144.0 1422.1 158.1 1424.0 172.0C1424.8 178.1 1425.0 185.0 1428.0 190.0C1431.3 195.6 1438.2 199.2 1443.0 204.0C1452.2 213.2 1462.4 221.7 1470.0 232.0C1476.7 241.0 1481.5 251.7 1486.0 262.0C1488.5 267.7 1489.4 274.0 1491.0 280.0C1492.4 285.6 1494.1 291.3 1495.0 297.0C1495.6 301.3 1495.7 305.7 1495.5 310.0C1495.3 314.7 1494.9 319.4 1494.0 324.0C1493.1 328.7 1491.8 333.5 1490.0 338.0C1487.1 345.5 1484.1 353.1 1480.0 360.0C1475.1 368.4 1468.8 376.1 1463.0 384.0C1456.5 392.8 1449.1 401.0 1443.0 410.0C1437.1 418.6 1432.0 427.8 1427.0 437.0C1422.4 445.5 1417.0 453.9 1414.0 463.0C1410.4 473.9 1408.5 485.6 1407.0 497.0C1405.5 507.9 1404.4 519.0 1405.0 530.0C1405.8 545.0 1407.8 560.3 1411.0 575.0C1413.8 587.9 1420.1 600.1 1423.0 613.0C1426.7 629.4 1429.3 646.2 1431.0 663.0C1433.3 686.9 1433.7 711.0 1435.0 735.0L339 735 Z" fill="#f8cda4"/>
<path d="M1416 86C1417.3 100.7 1418.6 115.3 1420.0 130.0C1421.3 144.0 1422.1 158.1 1424.0 172.0C1424.8 178.1 1425.0 185.0 1428.0 190.0C1431.3 195.6 1438.2 199.2 1443.0 204.0C1452.2 213.2 1462.4 221.7 1470.0 232.0C1476.7 241.0 1481.5 251.7 1486.0 262.0C1488.5 267.7 1489.4 274.0 1491.0 280.0C1492.4 285.6 1494.1 291.3 1495.0 297.0C1495.6 301.3 1495.7 305.7 1495.5 310.0C1495.3 314.7 1494.9 319.4 1494.0 324.0C1493.1 328.7 1491.8 333.5 1490.0 338.0C1487.1 345.5 1484.1 353.1 1480.0 360.0C1475.1 368.4 1468.8 376.1 1463.0 384.0C1456.5 392.8 1449.1 401.0 1443.0 410.0C1437.1 418.6 1432.0 427.8 1427.0 437.0C1422.4 445.5 1417.0 453.9 1414.0 463.0C1410.4 473.9 1408.5 485.6 1407.0 497.0C1405.5 507.9 1404.4 519.0 1405.0 530.0C1405.8 545.0 1407.8 560.3 1411.0 575.0C1413.8 587.9 1420.1 600.1 1423.0 613.0C1426.7 629.4 1429.3 646.2 1431.0 663.0C1433.3 686.9 1433.7 711.0 1435.0 735.0" fill="none" stroke="#dfba93" stroke-width="8.5" stroke-linecap="round"/>
<path d="M1124 372C1125.0 384.7 1124.0 397.9 1127.0 410.0C1129.3 419.2 1135.1 427.7 1140.0 436.0C1146.1 446.3 1154.4 455.4 1160.0 466.0C1167.8 480.7 1173.9 496.4 1180.0 512.0C1187.2 530.4 1193.5 549.3 1200.0 568.0C1207.5 589.3 1215.0 610.6 1222.0 632.0C1228.3 651.2 1234.5 670.5 1240.0 690.0C1244.2 704.9 1247.3 720.0 1251.0 735.0" fill="none" stroke="#e0ba93" stroke-width="7" stroke-linecap="round"/>
<path d="M1069.5 239 C1070 280 1068 320 1068 360" fill="none" stroke="#b5691c" stroke-width="7.5" stroke-linecap="round"/>
<path d="M1153 180C1156.0 193.3 1159.4 206.6 1162.0 220.0C1164.4 232.6 1166.3 245.3 1168.0 258.0C1169.9 272.0 1172.2 286.0 1173.0 300.0C1173.6 310.0 1173.0 320.1 1172.0 330.0C1171.0 339.4 1168.7 348.7 1167.0 358.0" fill="none" stroke="#b5691c" stroke-width="7.5" stroke-linecap="round"/>
<!-- left eye -->
<path d="M578.0 403.0C598.7 398.0 619.1 391.4 640.0 388.0C662.1 384.4 684.6 383.0 707.0 382.0C723.6 381.3 740.6 380.9 757.0 383.0C771.6 384.9 786.5 388.3 800.0 394.0C817.5 401.3 835.2 410.4 850.0 422.0C861.9 431.4 871.4 444.4 880.0 457.0C889.1 470.4 895.3 485.7 903.0 500.0C893.0 507.0 883.3 514.5 873.0 521.0C862.3 527.8 851.4 534.6 840.0 540.0C829.4 545.0 818.3 549.1 807.0 552.0C795.9 554.9 784.4 556.5 773.0 557.5C762.1 558.5 750.9 559.0 740.0 558.0C728.9 557.0 717.7 554.7 707.0 551.5C695.4 548.0 683.8 543.6 673.0 538.0C661.5 532.1 649.6 525.6 640.0 517.0C628.6 506.6 618.6 494.0 610.0 481.0C601.4 468.0 595.7 453.0 588.5 439.0C586.7 433.0 584.8 427.0 583.0 421.0C581.3 415.0 579.7 409.0 578.0 403.0Z" fill="#ffffff"/>
<g clip-path="url(#cle)">
<circle cx="743" cy="487" r="70" fill="#6b2200"/>
<g clip-path="url(#cil)"><circle cx="749" cy="491" r="65" fill="url(#iris)"/>
<circle cx="743.5" cy="485" r="38.5" fill="#000"/>
<circle cx="777" cy="447" r="29" fill="#fff" fill-opacity="0.66"/>
<circle cx="720.5" cy="519.5" r="15" fill="#fff" fill-opacity="0.66"/></g>
</g>
<path d="M578.0 403.0C598.7 398.0 619.1 391.4 640.0 388.0C662.1 384.4 684.6 383.0 707.0 382.0C723.6 381.3 740.6 380.9 757.0 383.0C771.6 384.9 786.5 388.3 800.0 394.0C817.5 401.3 835.2 410.4 850.0 422.0C861.9 431.4 871.4 444.4 880.0 457.0C889.1 470.4 895.3 485.7 903.0 500.0C901.0 499.3 899.1 498.5 897.0 498.0C889.1 496.1 881.0 494.6 873.0 493.0C851.0 488.7 829.0 484.6 807.0 480.5C784.7 476.3 762.3 472.2 740.0 468.0C717.7 463.7 695.3 459.3 673.0 455.0C644.8 449.6 616.7 444.3 588.5 439.0C586.7 433.0 584.8 427.0 583.0 421.0C581.3 415.0 579.7 409.0 578.0 403.0Z" fill="#ec9b42"/>
<path d="M903 500C901.0 499.3 899.1 498.5 897.0 498.0C889.1 496.1 881.0 494.6 873.0 493.0C851.0 488.7 829.0 484.6 807.0 480.5C784.7 476.3 762.3 472.2 740.0 468.0C717.7 463.7 695.3 459.3 673.0 455.0C644.8 449.6 616.7 444.3 588.5 439.0" fill="none" stroke="#b0651a" stroke-width="7"/>
<path d="M578.0 403.0C598.7 398.0 619.1 391.4 640.0 388.0C662.1 384.4 684.6 383.0 707.0 382.0C723.6 381.3 740.6 380.9 757.0 383.0C771.6 384.9 786.5 388.3 800.0 394.0C817.5 401.3 835.2 410.4 850.0 422.0C861.9 431.4 871.4 444.4 880.0 457.0C889.1 470.4 895.3 485.7 903.0 500.0C893.0 507.0 883.3 514.5 873.0 521.0C862.3 527.8 851.4 534.6 840.0 540.0C829.4 545.0 818.3 549.1 807.0 552.0C795.9 554.9 784.4 556.5 773.0 557.5C762.1 558.5 750.9 559.0 740.0 558.0C728.9 557.0 717.7 554.7 707.0 551.5C695.4 548.0 683.8 543.6 673.0 538.0C661.5 532.1 649.6 525.6 640.0 517.0C628.6 506.6 618.6 494.0 610.0 481.0C601.4 468.0 595.7 453.0 588.5 439.0C586.7 433.0 584.8 427.0 583.0 421.0C581.3 415.0 579.7 409.0 578.0 403.0Z" fill="none" stroke="#b0651a" stroke-width="7" stroke-linejoin="round"/>
<!-- right eye -->
<path d="M1190.0 470.0C1197.7 460.0 1203.9 448.5 1213.0 440.0C1227.2 426.8 1244.0 416.2 1260.0 405.0C1282.0 389.6 1304.7 375.0 1327.0 360.0C1339.0 360.0 1351.1 359.0 1363.0 360.0C1379.4 361.4 1395.7 364.7 1412.0 367.0C1410.7 378.0 1409.3 389.0 1408.0 400.0C1406.0 408.3 1404.8 416.9 1402.0 425.0C1397.8 436.9 1393.3 449.1 1387.0 460.0C1380.3 471.7 1372.4 483.3 1363.0 493.0C1353.4 503.0 1342.0 512.3 1330.0 519.0C1320.0 524.6 1308.3 528.7 1297.0 530.0C1285.9 531.3 1273.7 530.2 1263.0 527.0C1252.4 523.8 1242.1 517.6 1233.0 511.0C1225.4 505.6 1219.3 498.0 1213.0 491.0C1208.3 485.7 1205.1 478.7 1200.0 474.0C1197.4 471.7 1193.3 471.3 1190.0 470.0Z" fill="#ffffff"/>
<g clip-path="url(#cre)">
<circle cx="1290" cy="467" r="62" fill="#6b2200"/>
<g clip-path="url(#cir)"><circle cx="1295" cy="471" r="57" fill="url(#iris)"/>
<circle cx="1290.5" cy="466" r="33.5" fill="#000"/>
<circle cx="1323" cy="421" r="26" fill="#fff" fill-opacity="0.66"/>
<circle cx="1268" cy="487" r="13.5" fill="#fff" fill-opacity="0.66"/></g>
</g>
<path d="M1190.0 470.0C1197.7 460.0 1203.9 448.5 1213.0 440.0C1227.2 426.8 1244.0 416.2 1260.0 405.0C1282.0 389.6 1304.7 375.0 1327.0 360.0C1339.0 360.0 1351.1 359.0 1363.0 360.0C1379.4 361.4 1395.7 364.7 1412.0 367.0C1410.7 378.0 1409.3 389.0 1408.0 400.0C1398.7 403.3 1389.4 407.0 1380.0 410.0C1357.8 417.0 1335.2 422.8 1313.0 430.0C1290.8 437.2 1268.7 444.6 1247.0 453.0C1231.0 459.2 1215.7 469.3 1200.0 474.0C1196.7 475.0 1193.3 471.3 1190.0 470.0Z" fill="#ec9b42"/>
<path d="M1408 400C1398.7 403.3 1389.4 407.0 1380.0 410.0C1357.8 417.0 1335.2 422.8 1313.0 430.0C1290.8 437.2 1268.7 444.6 1247.0 453.0C1231.0 459.2 1215.7 469.3 1200.0 474.0C1196.7 475.0 1193.3 471.3 1190.0 470.0" fill="none" stroke="#b0651a" stroke-width="7"/>
<path d="M1190.0 470.0C1197.7 460.0 1203.9 448.5 1213.0 440.0C1227.2 426.8 1244.0 416.2 1260.0 405.0C1282.0 389.6 1304.7 375.0 1327.0 360.0C1339.0 360.0 1351.1 359.0 1363.0 360.0C1379.4 361.4 1395.7 364.7 1412.0 367.0C1410.7 378.0 1409.3 389.0 1408.0 400.0C1406.0 408.3 1404.8 416.9 1402.0 425.0C1397.8 436.9 1393.3 449.1 1387.0 460.0C1380.3 471.7 1372.4 483.3 1363.0 493.0C1353.4 503.0 1342.0 512.3 1330.0 519.0C1320.0 524.6 1308.3 528.7 1297.0 530.0C1285.9 531.3 1273.7 530.2 1263.0 527.0C1252.4 523.8 1242.1 517.6 1233.0 511.0C1225.4 505.6 1219.3 498.0 1213.0 491.0C1208.3 485.7 1205.1 478.7 1200.0 474.0C1197.4 471.7 1193.3 471.3 1190.0 470.0Z" fill="none" stroke="#b0651a" stroke-width="7" stroke-linejoin="round"/>
<!-- brows -->
<path d="M427.0 323.0C434.7 309.7 441.2 295.6 450.0 283.0C459.9 268.8 471.1 255.2 483.0 242.5C493.4 231.4 504.7 221.0 516.7 211.7C527.0 203.7 538.4 196.7 550.0 190.8C560.5 185.5 571.7 181.1 583.0 178.3C593.9 175.6 605.4 174.5 616.7 174.2C627.8 173.9 639.1 174.9 650.0 176.7C661.2 178.5 672.4 181.1 683.0 185.0C700.9 191.5 718.5 199.4 735.6 207.8C754.5 217.1 772.8 227.5 791.0 238.0C809.8 248.8 828.5 259.9 846.7 271.7C865.5 283.9 883.8 297.0 902.0 310.0C920.8 323.4 938.1 339.3 957.8 351.0C970.8 358.8 985.6 364.0 1000.0 368.5C1008.0 371.0 1016.7 372.4 1025.0 372.0C1033.4 371.6 1042.1 369.1 1050.0 366.0C1057.4 363.1 1064.0 358.0 1071.0 354.0C1073.0 364.3 1076.0 374.6 1077.0 385.0C1077.6 391.6 1077.1 398.5 1076.0 405.0C1075.1 410.8 1073.1 416.5 1071.0 422.0C1069.8 425.2 1067.7 428.0 1066.0 431.0C1072.3 429.3 1078.7 427.9 1085.0 426.0C1090.7 424.2 1096.3 421.0 1102.0 420.0C1104.0 419.7 1106.0 421.3 1108.0 422.0C1100.3 431.3 1094.4 442.8 1085.0 450.0C1072.4 459.8 1057.4 469.3 1042.0 473.0C1024.2 477.3 1004.2 475.7 985.6 474.0C966.9 472.2 948.2 467.6 930.0 462.5C911.1 457.1 892.3 450.5 874.4 442.5C855.3 434.0 837.1 423.4 819.0 413.0C800.0 402.1 781.4 390.5 763.0 378.6C744.3 366.5 727.0 352.2 707.8 341.0C689.3 330.2 670.0 320.1 650.0 312.5C634.0 306.4 616.9 302.7 600.0 300.0C583.6 297.3 566.7 296.2 550.0 296.3C533.3 296.4 516.3 297.5 500.0 300.8C483.0 304.3 466.7 311.6 450.0 316.7C442.4 319.0 434.7 320.9 427.0 323.0Z" fill="#200000" stroke="#000" stroke-width="19.5" stroke-linejoin="round" clip-path="url(#clb)"/>
<path d="M1138.0 351.0C1142.0 353.0 1145.7 356.0 1150.0 357.0C1155.4 358.3 1161.5 358.8 1167.0 358.0C1175.5 356.8 1184.3 354.8 1192.0 351.0C1211.0 341.5 1229.5 330.2 1247.0 318.0C1269.8 302.2 1291.0 283.9 1313.0 267.0C1331.3 252.9 1349.7 239.0 1368.0 225.0C1376.3 218.7 1383.7 209.9 1393.0 206.0C1402.0 202.2 1413.1 201.7 1423.0 202.0C1432.4 202.3 1443.0 203.4 1451.0 208.0C1461.7 214.1 1472.0 223.7 1479.0 234.0C1486.7 245.4 1489.7 260.0 1495.0 273.0C1485.0 275.3 1474.6 276.4 1465.0 280.0C1450.6 285.4 1436.5 292.4 1423.0 300.0C1408.8 308.0 1395.7 318.0 1382.0 327.0C1359.0 342.0 1336.1 357.1 1313.0 372.0C1291.1 386.1 1269.3 400.4 1247.0 414.0C1234.3 421.8 1221.1 428.9 1208.0 436.0C1196.5 442.2 1184.9 450.3 1173.0 454.0C1168.9 455.3 1163.8 453.1 1160.0 451.0C1154.4 447.8 1149.3 442.9 1145.0 438.0C1140.3 432.6 1136.3 426.3 1133.0 420.0C1129.7 413.7 1126.5 406.9 1125.0 400.0C1123.2 391.9 1122.4 383.2 1123.0 375.0C1123.4 369.2 1125.0 362.7 1128.0 358.0C1130.0 354.7 1134.7 353.3 1138.0 351.0Z" fill="#200000" stroke="#000" stroke-width="19.5" stroke-linejoin="round" clip-path="url(#crb)"/>
<!-- registration cross -->
<path d="M425.5 171.5 H435.5 M430.5 166.5 V176.5" stroke="#222" stroke-width="1"/>
<path d="M339 94 L346 94 L339 102 Z" fill="#5a5a5a"/><path d="M339 727 L339 719 L347 727 Z" fill="#e0b78f"/>
</svg><div class="b" style="left:339px;top:738px;width:1278px;height:342px;background:#323232"></div>
<div class="b" style="left:339px;top:738px;width:1278px;height:19px;background:#2a2a2a;border-bottom:1px solid #262626"></div>
<div class="b" style="left:339px;top:738px;width:57px;height:19px;background:#323232"></div>
<div class="b" style="left:446px;top:738px;width:1px;height:18px;background:#343434"></div><div class="b" style="left:491px;top:738px;width:1px;height:18px;background:#343434"></div>
<span class="t" style="left:346.0px;top:741.8px;font-size:11.5px;line-height:11.5px;color:#f0f0f0;font-weight:700;letter-spacing:-0.682px;">Timeline</span>
<span class="t" style="left:402.0px;top:741.8px;font-size:11.5px;line-height:11.5px;color:#7d7d7d;font-weight:700;letter-spacing:-0.882px;">Actions</span>
<span class="t" style="left:455.0px;top:741.8px;font-size:11.5px;line-height:11.5px;color:#7d7d7d;font-weight:700;letter-spacing:-1.178px;">Scene</span>
<svg class="ico" style="left:1600px;top:744px" width="11" height="8" viewBox="0 0 11 8"><path d="M0 0.5 H11 M0 2.8 H11 M0 5.1 H11 M0 7.4 H11" stroke="#bdbdbd" stroke-width="1"/></svg>
<div class="b" style="left:339px;top:793px;width:1278px;height:1px;background:#262626"></div>
<div class="b" style="left:590px;top:757px;width:1px;height:313px;background:#262626"></div>
<svg class="ico" style="left:348.0px;top:767.0px" width="16" height="16" viewBox="0 0 16 16"><rect x="1.2" y="1.2" width="13.6" height="13.6" fill="none" stroke="#e0e0e0" stroke-width="1.3"/><path d="M8 4 V12 M4 8 H12" stroke="#e0e0e0" stroke-width="1.4"/></svg>
<svg class="ico" style="left:380.0px;top:768.5px" width="16" height="13" viewBox="0 0 16 13"><path d="M0.5 2.5 C0.5 1 1.2 0.8 2 0.8 H5.4 L7 2.6 H14 C15 2.6 15.5 3 15.5 4 V12.4 H0.5 Z" fill="#e0e0e0"/></svg>
<svg class="ico" style="left:414.5px;top:767.5px" width="13" height="15" viewBox="0 0 13 15"><path d="M0.5 2.8 H12.5" stroke="#e0e0e0" stroke-width="1.6"/><path d="M4.4 2 V0.8 H8.6 V2" fill="none" stroke="#e0e0e0" stroke-width="1.2"/><path d="M1.6 4.2 H11.4 L10.4 14.4 H2.6 Z" fill="#e0e0e0"/><path d="M4.6 6 V12.6 M6.5 6 V12.6 M8.4 6 V12.6" stroke="#323232" stroke-width="1"/></svg>
<svg class="ico" style="left:491.5px;top:770.5px" width="13" height="9" viewBox="0 0 13 9"><rect x="0.5" y="0.8" width="8.4" height="7.4" rx="1" fill="#555"/><path d="M8.6 4.5 L12.6 1.4 V7.6 Z" fill="#555"/></svg>
<svg class="ico" style="left:522.0px;top:767.5px" width="16" height="15" viewBox="0 0 16 15"><rect x="5.4" y="0.6" width="5.2" height="4" fill="#e0e0e0"/><rect x="0.6" y="9.6" width="5.2" height="4" fill="#e0e0e0"/><rect x="10.2" y="9.6" width="5.2" height="4" fill="#e0e0e0"/><path d="M8 4.6 V7.4 M3.2 9.6 V7.4 H12.8 V9.6" fill="none" stroke="#e0e0e0" stroke-width="1.2"/><path d="M13.8 14.8 L15.6 14.8 L15.6 13 Z" fill="#e0e0e0"/></svg>
<svg class="ico" style="left:554.5px;top:768.0px" width="15" height="14" viewBox="0 0 15 14"><path d="M1 0.5 V13 H14.5" fill="none" stroke="#e0e0e0" stroke-width="1.4"/><path d="M3.6 10.6 L7 6.4 L9 8.4 L12.6 4" fill="none" stroke="#e0e0e0" stroke-width="1.3"/><path d="M9.8 3.2 H13.4 V6.8 Z" fill="#e0e0e0"/></svg>
<span class="t" style="left:624.0px;top:771.5px;font-size:12px;line-height:12px;color:#8c8c8c;letter-spacing:-0.206px;">30.00</span>
<span class="t" style="left:657.0px;top:768.2px;font-size:8.5px;line-height:8.5px;color:#8c8c8c;letter-spacing:-0.177px;">FPS</span>
<span class="t" style="left:699.5px;top:771.5px;font-size:12px;line-height:12px;color:#4f9be0;">5</span>
<span class="t" style="left:709.0px;top:768.2px;font-size:8.5px;line-height:8.5px;color:#d8d8d8;">F</span>
<svg class="ico" style="left:918.5px;top:768.0px" width="9" height="14" viewBox="0 0 9 14"><path d="M7.4 1.4 L1.8 7 L7.4 12.6" fill="none" stroke="#e0e0e0" stroke-width="1.8"/></svg>
<svg class="ico" style="left:945.5px;top:765.5px" width="17" height="17" viewBox="0 0 17 17"><rect x="1" y="5" width="11.4" height="11" fill="#e0e0e0"/><circle cx="6.7" cy="10.5" r="2.5" fill="#323232"/><path d="M11 5.4 L13.2 0.6 L15.6 5.4 M11.8 3.8 H14.8" fill="none" stroke="#e0e0e0" stroke-width="1.1"/><path d="M12 16.8 L13.6 16.8 L13.6 15.2 Z" fill="#e0e0e0"/></svg>
<svg class="ico" style="left:979.5px;top:768.0px" width="9" height="14" viewBox="0 0 9 14"><path d="M1.6 1.4 L7.2 7 L1.6 12.6" fill="none" stroke="#e0e0e0" stroke-width="1.8"/></svg>
<div class="b" style="left:1001px;top:762px;width:1px;height:26px;background:#454545"></div>
<svg class="ico" style="left:1011.0px;top:768.5px" width="18" height="13" viewBox="0 0 18 13"><circle cx="6" cy="6.5" r="5" fill="#bdbdbd"/><circle cx="11" cy="6.5" r="5.2" fill="#e0e0e0" stroke="#323232" stroke-width="1"/><path d="M15.4 12.8 L17 12.8 L17 11.2 Z" fill="#e0e0e0"/></svg>
<svg class="ico" style="left:1041.5px;top:768.0px" width="17" height="14" viewBox="0 0 17 14"><rect x="1" y="0.6" width="3.4" height="12.8" fill="#e0e0e0"/><rect x="6" y="0.6" width="3.4" height="12.8" fill="#e0e0e0"/><rect x="11" y="0.6" width="3.4" height="12.8" fill="#e0e0e0"/><rect x="6.6" y="9" width="2.2" height="3" fill="#323232"/><path d="M14.6 13.8 L16.4 13.8 L16.4 12 Z" fill="#e0e0e0"/></svg>
<svg class="ico" style="left:1073.0px;top:768.5px" width="14" height="13" viewBox="0 0 14 13"><rect x="0.6" y="3.6" width="8.4" height="8.8" fill="#4c4c4c"/><rect x="4.6" y="0.6" width="8.4" height="8.8" fill="#444" stroke="#4c4c4c"/></svg>
<svg class="ico" style="left:1102.0px;top:769.0px" width="16" height="12" viewBox="0 0 16 12"><path d="M1 11 V1 H15 V11 H11 V6.4 H5 V11 Z" fill="#e0e0e0"/><path d="M6.4 7.6 H9.6 M8 6.4 V9.2" stroke="#e0e0e0" stroke-width="1"/></svg>
<div class="b" style="left:1127px;top:762px;width:1px;height:26px;background:#454545"></div>
<svg class="ico" style="left:1137.0px;top:767.5px" width="18" height="15" viewBox="0 0 18 15"><path d="M5 5.4 H1.4 V13.6 H16.6 V9.6" fill="none" stroke="#e0e0e0" stroke-width="1.7"/><path d="M6 8 V4 H12" fill="none" stroke="#e0e0e0" stroke-width="1.7"/><path d="M11.6 0.6 L16.4 4 L11.6 7.4 Z" fill="#e0e0e0"/></svg>
<svg class="ico" style="left:1169.5px;top:768.5px" width="15" height="13" viewBox="0 0 15 13"><path d="M9.4 0.6 V12.4 L0.8 6.5 Z" fill="#e0e0e0"/><rect x="11.4" y="0.6" width="2.6" height="11.8" fill="#e0e0e0"/></svg>
<svg class="ico" style="left:1200.0px;top:768.0px" width="13" height="14" viewBox="0 0 13 14"><path d="M1 0.6 L12.4 7 L1 13.4 Z" fill="#e0e0e0"/></svg>
<svg class="ico" style="left:1228.5px;top:768.5px" width="15" height="13" viewBox="0 0 15 13"><rect x="1" y="0.6" width="2.6" height="11.8" fill="#e0e0e0"/><path d="M5.6 0.6 V12.4 L14.2 6.5 Z" fill="#e0e0e0"/></svg>
<svg class="ico" style="left:1458.5px;top:768.5px" width="14" height="13" viewBox="0 0 14 13"><path d="M3 4.6 H8.6 C13.4 4.6 13.4 9.2 9.6 9.4" fill="none" stroke="#e0e0e0" stroke-width="1.6"/><path d="M0.6 4.6 L4.8 1.2 V8 Z" fill="#e0e0e0"/><path d="M1 12 H13" stroke="#e0e0e0" stroke-width="1.6"/></svg>
<div class="b" style="left:1490px;top:775px;width:79px;height:1px;background:#4c4c4c"></div>
<div class="b" style="left:1516.5px;top:769.5px;width:12px;height:12px;border:1.8px solid #e0e0e0;border-radius:50%;background:#323232"></div>
<svg class="ico" style="left:1588.5px;top:771.5px" width="16" height="9" viewBox="0 0 16 9"><path d="M0.4 8.6 L4.4 1.6 L6 4.4 M5 8.6 L10 0.6 L15.6 8.6 Z" fill="#e0e0e0" stroke="#e0e0e0" stroke-width="0.8"/></svg>
<div class="b" style="left:339px;top:828px;width:1278px;height:1px;background:#262626"></div>
<svg class="ico" style="left:349.0px;top:803.5px" width="14" height="15" viewBox="0 0 14 15"><path d="M7 0.6 L13.4 4 L7 7.4 L0.6 4 Z" fill="#e0e0e0"/><path d="M1 7.4 L7 10.6 L13 7.4 M1 10.8 L7 14 L13 10.8" fill="none" stroke="#e0e0e0" stroke-width="1.6"/></svg>
<div class="b" style="left:488.5px;top:808.5px;width:5px;height:5px;border-radius:50%;background:#e0e0e0"></div>
<div class="b" style="left:509px;top:805.5px;width:8px;height:11px;border:1.8px solid #f0f0f0;border-radius:1px"></div>
<svg class="ico" style="left:531.0px;top:805.0px" width="16" height="12" viewBox="0 0 16 12"><path d="M1 6 C4 1.4 12 1.4 15 6 C12 10.6 4 10.6 1 6Z" fill="none" stroke="#e0e0e0" stroke-width="1.4"/><circle cx="8" cy="6" r="2" fill="#e0e0e0"/><path d="M2.6 0.8 L13.4 11.2" stroke="#e0e0e0" stroke-width="1.5"/></svg>
<svg class="ico" style="left:560.0px;top:804.0px" width="10" height="13" viewBox="0 0 10 13"><path d="M2.6 6 V4 C2.6 0.6 7.4 0.6 7.4 4 V6" fill="none" stroke="#f0f0f0" stroke-width="1.5"/><rect x="0.8" y="5.6" width="8.4" height="6.8" rx="0.8" fill="#f0f0f0"/><rect x="4.2" y="7.6" width="1.6" height="2.8" fill="#323232"/></svg>
<div class="b" style="left:591px;top:794px;width:1026px;height:34px;background:#2f2f2f"></div>
<div class="b" style="left:591px;top:809px;width:1026px;height:1px;background:#262626"></div>
<svg class="ico" style="left:591px;top:794px;overflow:hidden" width="1025" height="34" viewBox="0 0 1025 34"><path d="M0.5 16 V23" stroke="#3c3c3c" stroke-width="1"/><path d="M15.6 16 V23" stroke="#3c3c3c" stroke-width="1"/><path d="M30.6 16 V23" stroke="#3c3c3c" stroke-width="1"/><path d="M45.7 16 V23" stroke="#3c3c3c" stroke-width="1"/><path d="M60.7 0 V15" stroke="#242424" stroke-width="1"/><path d="M60.7 16 V23" stroke="#3c3c3c" stroke-width="1"/><path d="M75.8 16 V23" stroke="#3c3c3c" stroke-width="1"/><path d="M90.9 16 V23" stroke="#3c3c3c" stroke-width="1"/><path d="M105.9 16 V23" stroke="#3c3c3c" stroke-width="1"/><path d="M121.0 16 V23" stroke="#3c3c3c" stroke-width="1"/><path d="M136.0 0 V15" stroke="#242424" stroke-width="1"/><path d="M136.0 16 V23" stroke="#3c3c3c" stroke-width="1"/><path d="M151.1 16 V23" stroke="#3c3c3c" stroke-width="1"/><path d="M166.2 16 V23" stroke="#3c3c3c" stroke-width="1"/><path d="M181.2 16 V23" stroke="#3c3c3c" stroke-width="1"/><path d="M196.3 16 V23" stroke="#3c3c3c" stroke-width="1"/><path d="M211.3 0 V15" stroke="#242424" stroke-width="1"/><path d="M211.3 16 V23" stroke="#3c3c3c" stroke-width="1"/><path d="M226.4 16 V23" stroke="#3c3c3c" stroke-width="1"/><path d="M241.5 16 V23" stroke="#3c3c3c" stroke-width="1"/><path d="M256.5 16 V23" stroke="#3c3c3c" stroke-width="1"/><path d="M271.6 16 V23" stroke="#3c3c3c" stroke-width="1"/><path d="M286.6 0 V15" stroke="#242424" stroke-width="1"/><path d="M286.6 16 V23" stroke="#3c3c3c" stroke-width="1"/><path d="M301.7 16 V23" stroke="#3c3c3c" stroke-width="1"/><path d="M316.8 16 V23" stroke="#3c3c3c" stroke-width="1"/><path d="M331.8 16 V23" stroke="#3c3c3c" stroke-width="1"/><path d="M346.9 16 V23" stroke="#3c3c3c" stroke-width="1"/><path d="M361.9 0 V15" stroke="#242424" stroke-width="1"/><path d="M361.9 16 V23" stroke="#3c3c3c" stroke-width="1"/><path d="M377.0 16 V23" stroke="#3c3c3c" stroke-width="1"/><path d="M392.1 16 V23" stroke="#3c3c3c" stroke-width="1"/><path d="M407.1 16 V23" stroke="#3c3c3c" stroke-width="1"/><path d="M422.2 16 V23" stroke="#3c3c3c" stroke-width="1"/><path d="M437.2 0 V15" stroke="#242424" stroke-width="1"/><path d="M437.2 16 V23" stroke="#3c3c3c" stroke-width="1"/><path d="M452.3 16 V23" stroke="#3c3c3c" stroke-width="1"/><path d="M467.4 16 V23" stroke="#3c3c3c" stroke-width="1"/><path d="M482.4 16 V23" stroke="#3c3c3c" stroke-width="1"/><path d="M497.5 16 V23" stroke="#3c3c3c" stroke-width="1"/><path d="M512.5 0 V15" stroke="#242424" stroke-width="1"/><path d="M512.5 16 V23" stroke="#3c3c3c" stroke-width="1"/><path d="M527.6 16 V23" stroke="#3c3c3c" stroke-width="1"/><path d="M542.7 16 V23" stroke="#3c3c3c" stroke-width="1"/><path d="M557.7 16 V23" stroke="#3c3c3c" stroke-width="1"/><path d="M572.8 16 V23" stroke="#3c3c3c" stroke-width="1"/><path d="M587.8 0 V15" stroke="#242424" stroke-width="1"/><path d="M587.8 16 V23" stroke="#3c3c3c" stroke-width="1"/><path d="M602.9 16 V23" stroke="#3c3c3c" stroke-width="1"/><path d="M618.0 16 V23" stroke="#3c3c3c" stroke-width="1"/><path d="M633.0 16 V23" stroke="#3c3c3c" stroke-width="1"/><path d="M648.1 16 V23" stroke="#3c3c3c" stroke-width="1"/><path d="M663.1 0 V15" stroke="#242424" stroke-width="1"/><path d="M663.1 16 V23" stroke="#3c3c3c" stroke-width="1"/><path d="M678.2 16 V23" stroke="#3c3c3c" stroke-width="1"/><path d="M693.3 16 V23" stroke="#3c3c3c" stroke-width="1"/><path d="M708.3 16 V23" stroke="#3c3c3c" stroke-width="1"/><path d="M723.4 16 V23" stroke="#3c3c3c" stroke-width="1"/><path d="M738.4 0 V15" stroke="#242424" stroke-width="1"/><path d="M738.4 16 V23" stroke="#3c3c3c" stroke-width="1"/><path d="M753.5 16 V23" stroke="#3c3c3c" stroke-width="1"/><path d="M768.6 16 V23" stroke="#3c3c3c" stroke-width="1"/><path d="M783.6 16 V23" stroke="#3c3c3c" stroke-width="1"/><path d="M798.7 16 V23" stroke="#3c3c3c" stroke-width="1"/><path d="M813.7 0 V15" stroke="#242424" stroke-width="1"/><path d="M813.7 16 V23" stroke="#3c3c3c" stroke-width="1"/><path d="M828.8 16 V23" stroke="#3c3c3c" stroke-width="1"/><path d="M843.9 16 V23" stroke="#3c3c3c" stroke-width="1"/><path d="M858.9 16 V23" stroke="#3c3c3c" stroke-width="1"/><path d="M874.0 16 V23" stroke="#3c3c3c" stroke-width="1"/><path d="M889.0 0 V15" stroke="#242424" stroke-width="1"/><path d="M889.0 16 V23" stroke="#3c3c3c" stroke-width="1"/><path d="M904.1 16 V23" stroke="#3c3c3c" stroke-width="1"/><path d="M919.2 16 V23" stroke="#3c3c3c" stroke-width="1"/><path d="M934.2 16 V23" stroke="#3c3c3c" stroke-width="1"/><path d="M949.3 16 V23" stroke="#3c3c3c" stroke-width="1"/><path d="M964.3 0 V15" stroke="#242424" stroke-width="1"/><path d="M964.3 16 V23" stroke="#3c3c3c" stroke-width="1"/><path d="M979.4 16 V23" stroke="#3c3c3c" stroke-width="1"/><path d="M994.5 16 V23" stroke="#3c3c3c" stroke-width="1"/><path d="M1009.5 16 V23" stroke="#3c3c3c" stroke-width="1"/></svg>
<span class="t" style="left:728.0px;top:816.2px;font-size:10.5px;line-height:10.5px;color:#8a8a8a;letter-spacing:-0.3px;">10</span>
<span class="t" style="left:803.3px;top:816.2px;font-size:10.5px;line-height:10.5px;color:#8a8a8a;letter-spacing:-0.3px;">15</span>
<span class="t" style="left:878.6px;top:816.2px;font-size:10.5px;line-height:10.5px;color:#8a8a8a;letter-spacing:-0.3px;">20</span>
<span class="t" style="left:953.9px;top:816.2px;font-size:10.5px;line-height:10.5px;color:#8a8a8a;letter-spacing:-0.3px;">25</span>
<span class="t" style="left:1029.2px;top:816.2px;font-size:10.5px;line-height:10.5px;color:#8a8a8a;letter-spacing:-0.3px;">30</span>
<span class="t" style="left:1104.5px;top:816.2px;font-size:10.5px;line-height:10.5px;color:#8a8a8a;letter-spacing:-0.3px;">35</span>
<span class="t" style="left:1179.8px;top:816.2px;font-size:10.5px;line-height:10.5px;color:#8a8a8a;letter-spacing:-0.3px;">40</span>
<span class="t" style="left:1255.1px;top:816.2px;font-size:10.5px;line-height:10.5px;color:#8a8a8a;letter-spacing:-0.3px;">45</span>
<span class="t" style="left:1330.4px;top:816.2px;font-size:10.5px;line-height:10.5px;color:#8a8a8a;letter-spacing:-0.3px;">50</span>
<span class="t" style="left:1405.7px;top:816.2px;font-size:10.5px;line-height:10.5px;color:#8a8a8a;letter-spacing:-0.3px;">55</span>
<span class="t" style="left:1481.0px;top:816.2px;font-size:10.5px;line-height:10.5px;color:#8a8a8a;letter-spacing:-0.3px;">60</span>
<span class="t" style="left:1556.3px;top:816.2px;font-size:10.5px;line-height:10.5px;color:#8a8a8a;letter-spacing:-0.3px;">65</span>
<span class="t" style="left:1031.2px;top:797.0px;font-size:11px;line-height:11px;color:#8a8a8a;font-style:italic;">1s</span>
<span class="t" style="left:1482.5px;top:797.0px;font-size:11px;line-height:11px;color:#8a8a8a;font-style:italic;">2s</span>
<div class="b" style="left:591px;top:828.5px;width:1017px;height:198.9px;background:#959595"></div>
<div class="b" style="left:339px;top:847.4px;width:251px;height:1px;background:#292929"></div>
<svg class="ico" style="left:367.0px;top:830.9px" width="14" height="13" viewBox="0 0 14 13"><path d="M1 1 H13 V12 H5 L1 8.5 Z" fill="#cfcfcf"/><path d="M1 8.5 H5 V12" fill="#323232" stroke="#cfcfcf" stroke-width="1"/><path d="M2.6 2.6 H11.4 V10.4" fill="none" stroke="#8a8a8a" stroke-width="1"/></svg>
<span class="t" style="left:391.0px;top:834.7px;font-size:10.5px;line-height:10.5px;color:#d6d6d6;letter-spacing:-0.378px;">KR_F_Eyebrow</span>
<div class="b" style="left:510.5px;top:832.4px;width:6.5px;height:11.5px;background:#ff4fff"></div>
<svg class="ico" style="left:560.0px;top:830.4px" width="10" height="13" viewBox="0 0 10 13"><path d="M2.6 6 V4 C2.6 0.6 7.4 0.6 7.4 4 V6" fill="none" stroke="#e8e8e8" stroke-width="1.5"/><rect x="0.8" y="5.6" width="8.4" height="6.8" rx="0.8" fill="#e8e8e8"/><rect x="4.2" y="7.6" width="1.6" height="2.8" fill="#323232"/></svg>
<div class="b" style="left:339px;top:867.3px;width:251px;height:1px;background:#292929"></div>
<svg class="ico" style="left:367.0px;top:850.8px" width="14" height="13" viewBox="0 0 14 13"><path d="M1 1 H13 V12 H5 L1 8.5 Z" fill="#cfcfcf"/><path d="M1 8.5 H5 V12" fill="#323232" stroke="#cfcfcf" stroke-width="1"/><path d="M2.6 2.6 H11.4 V10.4" fill="none" stroke="#8a8a8a" stroke-width="1"/></svg>
<span class="t" style="left:391.0px;top:854.6px;font-size:10.5px;line-height:10.5px;color:#d6d6d6;letter-spacing:-0.344px;">KR_B_Eyebrow</span>
<div class="b" style="left:510.5px;top:852.3px;width:6.5px;height:11.5px;background:#0e9a9a"></div>
<svg class="ico" style="left:560.0px;top:850.3px" width="10" height="13" viewBox="0 0 10 13"><path d="M2.6 6 V4 C2.6 0.6 7.4 0.6 7.4 4 V6" fill="none" stroke="#e8e8e8" stroke-width="1.5"/><rect x="0.8" y="5.6" width="8.4" height="6.8" rx="0.8" fill="#e8e8e8"/><rect x="4.2" y="7.6" width="1.6" height="2.8" fill="#323232"/></svg>
<div class="b" style="left:339px;top:887.2px;width:251px;height:1px;background:#292929"></div>
<svg class="ico" style="left:367.0px;top:871.2px" width="14" height="12" viewBox="0 0 14 12"><rect x="0.8" y="0.8" width="12.4" height="10.4" fill="#cfcfcf"/><rect x="2.6" y="2.6" width="8.8" height="6.8" fill="#3a3a3a"/><circle cx="7" cy="6" r="1.8" fill="#cfcfcf"/></svg>
<span class="t" style="left:391.0px;top:874.5px;font-size:10.5px;line-height:10.5px;color:#d6d6d6;letter-spacing:-0.273px;">Mask</span>
<div class="b" style="left:510.5px;top:872.2px;width:6.5px;height:11.5px;background:#00f0ff"></div>
<svg class="ico" style="left:560.0px;top:870.2px" width="10" height="13" viewBox="0 0 10 13"><path d="M2.6 6 V4 C2.6 0.6 7.4 0.6 7.4 4 V6" fill="none" stroke="#e8e8e8" stroke-width="1.5"/><rect x="0.8" y="5.6" width="8.4" height="6.8" rx="0.8" fill="#e8e8e8"/><rect x="4.2" y="7.6" width="1.6" height="2.8" fill="#323232"/></svg>
<div class="b" style="left:339px;top:907.1px;width:251px;height:1px;background:#292929"></div>
<svg class="ico" style="left:385.0px;top:890.6px" width="14" height="13" viewBox="0 0 14 13"><path d="M1 1 H13 V12 H5 L1 8.5 Z" fill="#cfcfcf"/><path d="M1 8.5 H5 V12" fill="#323232" stroke="#cfcfcf" stroke-width="1"/><rect x="4" y="3" width="7" height="6" fill="#3a3a3a"/><circle cx="7.5" cy="6" r="1.6" fill="#cfcfcf"/></svg>
<span class="t" style="left:409.0px;top:894.4px;font-size:10.5px;line-height:10.5px;color:#d6d6d6;letter-spacing:0.247px;">Blink</span>
<div class="b" style="left:510.5px;top:892.1px;width:6.5px;height:11.5px;background:#ff5050"></div>
<svg class="ico" style="left:560.0px;top:890.1px" width="10" height="13" viewBox="0 0 10 13"><path d="M2.6 6 V4 C2.6 0.6 7.4 0.6 7.4 4 V6" fill="none" stroke="#e8e8e8" stroke-width="1.5"/><rect x="0.8" y="5.6" width="8.4" height="6.8" rx="0.8" fill="#e8e8e8"/><rect x="4.2" y="7.6" width="1.6" height="2.8" fill="#323232"/></svg>
<div class="b" style="left:339px;top:926.9px;width:251px;height:1px;background:#292929"></div>
<svg class="ico" style="left:385.0px;top:910.5px" width="14" height="13" viewBox="0 0 14 13"><path d="M1 1 H13 V12 H5 L1 8.5 Z" fill="#cfcfcf"/><path d="M1 8.5 H5 V12" fill="#323232" stroke="#cfcfcf" stroke-width="1"/><rect x="4" y="3" width="7" height="6" fill="#3a3a3a"/><circle cx="7.5" cy="6" r="1.6" fill="#cfcfcf"/></svg>
<span class="t" style="left:409.0px;top:914.3px;font-size:10.5px;line-height:10.5px;color:#d6d6d6;letter-spacing:-0.427px;">KR_F_Eyeball</span>
<div class="b" style="left:510.5px;top:912.0px;width:6.5px;height:11.5px;background:#ff8410"></div>
<svg class="ico" style="left:560.0px;top:910.0px" width="10" height="13" viewBox="0 0 10 13"><path d="M2.6 6 V4 C2.6 0.6 7.4 0.6 7.4 4 V6" fill="none" stroke="#e8e8e8" stroke-width="1.5"/><rect x="0.8" y="5.6" width="8.4" height="6.8" rx="0.8" fill="#e8e8e8"/><rect x="4.2" y="7.6" width="1.6" height="2.8" fill="#323232"/></svg>
<div class="b" style="left:339px;top:946.8px;width:251px;height:1px;background:#292929"></div>
<svg class="ico" style="left:367.0px;top:930.9px" width="14" height="12" viewBox="0 0 14 12"><rect x="0.8" y="0.8" width="12.4" height="10.4" fill="#cfcfcf"/><rect x="2.6" y="2.6" width="8.8" height="6.8" fill="#3a3a3a"/><circle cx="7" cy="6" r="1.8" fill="#cfcfcf"/></svg>
<span class="t" style="left:391.0px;top:934.1px;font-size:10.5px;line-height:10.5px;color:#d6d6d6;letter-spacing:-0.273px;">Mask</span>
<div class="b" style="left:510.5px;top:931.9px;width:6.5px;height:11.5px;background:#ff8410"></div>
<svg class="ico" style="left:560.0px;top:929.9px" width="10" height="13" viewBox="0 0 10 13"><path d="M2.6 6 V4 C2.6 0.6 7.4 0.6 7.4 4 V6" fill="none" stroke="#e8e8e8" stroke-width="1.5"/><rect x="0.8" y="5.6" width="8.4" height="6.8" rx="0.8" fill="#e8e8e8"/><rect x="4.2" y="7.6" width="1.6" height="2.8" fill="#323232"/></svg>
<div class="b" style="left:339px;top:966.7px;width:251px;height:1px;background:#292929"></div>
<svg class="ico" style="left:385.0px;top:950.3px" width="14" height="13" viewBox="0 0 14 13"><path d="M1 1 H13 V12 H5 L1 8.5 Z" fill="#cfcfcf"/><path d="M1 8.5 H5 V12" fill="#323232" stroke="#cfcfcf" stroke-width="1"/><rect x="4" y="3" width="7" height="6" fill="#3a3a3a"/><circle cx="7.5" cy="6" r="1.6" fill="#cfcfcf"/></svg>
<span class="t" style="left:409.0px;top:954.0px;font-size:10.5px;line-height:10.5px;color:#d6d6d6;letter-spacing:0.247px;">Blink</span>
<div class="b" style="left:510.5px;top:951.8px;width:6.5px;height:11.5px;background:#9b30d8"></div>
<svg class="ico" style="left:560.0px;top:949.8px" width="10" height="13" viewBox="0 0 10 13"><path d="M2.6 6 V4 C2.6 0.6 7.4 0.6 7.4 4 V6" fill="none" stroke="#e8e8e8" stroke-width="1.5"/><rect x="0.8" y="5.6" width="8.4" height="6.8" rx="0.8" fill="#e8e8e8"/><rect x="4.2" y="7.6" width="1.6" height="2.8" fill="#323232"/></svg>
<div class="b" style="left:339px;top:967.7px;width:251px;height:19.9px;background:#2f6198"></div>
<div class="b" style="left:339px;top:986.6px;width:251px;height:1px;background:#292929"></div>
<svg class="ico" style="left:385.0px;top:970.2px" width="14" height="13" viewBox="0 0 14 13"><path d="M1 1 H13 V12 H5 L1 8.5 Z" fill="#cfcfcf"/><path d="M1 8.5 H5 V12" fill="#323232" stroke="#cfcfcf" stroke-width="1"/><rect x="4" y="3" width="7" height="6" fill="#3a3a3a"/><circle cx="7.5" cy="6" r="1.6" fill="#cfcfcf"/></svg>
<span class="t" style="left:409.0px;top:973.9px;font-size:10.5px;line-height:10.5px;color:#ffffff;letter-spacing:-0.427px;">KR_F_Eyeball</span>
<div class="b" style="left:510.5px;top:971.7px;width:6.5px;height:11.5px;background:#9b30d8"></div>
<svg class="ico" style="left:560.0px;top:969.7px" width="10" height="13" viewBox="0 0 10 13"><path d="M2.6 6 V4 C2.6 0.6 7.4 0.6 7.4 4 V6" fill="none" stroke="#e8e8e8" stroke-width="1.5"/><rect x="0.8" y="5.6" width="8.4" height="6.8" rx="0.8" fill="#e8e8e8"/><rect x="4.2" y="7.6" width="1.6" height="2.8" fill="#323232"/></svg>
<div class="b" style="left:339px;top:1006.5px;width:251px;height:1px;background:#292929"></div>
<svg class="ico" style="left:367.0px;top:990.1px" width="14" height="13" viewBox="0 0 14 13"><path d="M1 1 H13 V12 H5 L1 8.5 Z" fill="#cfcfcf"/><path d="M1 8.5 H5 V12" fill="#323232" stroke="#cfcfcf" stroke-width="1"/><path d="M2.6 2.6 H11.4 V10.4" fill="none" stroke="#8a8a8a" stroke-width="1"/></svg>
<span class="t" style="left:391.0px;top:993.8px;font-size:10.5px;line-height:10.5px;color:#d6d6d6;letter-spacing:-0.961px;">WE</span>
<div class="b" style="left:510.5px;top:991.6px;width:6.5px;height:11.5px;background:#6aa000"></div>
<svg class="ico" style="left:560.0px;top:989.6px" width="10" height="13" viewBox="0 0 10 13"><path d="M2.6 6 V4 C2.6 0.6 7.4 0.6 7.4 4 V6" fill="none" stroke="#e8e8e8" stroke-width="1.5"/><rect x="0.8" y="5.6" width="8.4" height="6.8" rx="0.8" fill="#e8e8e8"/><rect x="4.2" y="7.6" width="1.6" height="2.8" fill="#323232"/></svg>
<div class="b" style="left:339px;top:1026.4px;width:251px;height:1px;background:#292929"></div>
<svg class="ico" style="left:367.0px;top:1010.0px" width="14" height="13" viewBox="0 0 14 13"><path d="M1 1 H13 V12 H5 L1 8.5 Z" fill="#cfcfcf"/><path d="M1 8.5 H5 V12" fill="#323232" stroke="#cfcfcf" stroke-width="1"/><path d="M2.6 2.6 H11.4 V10.4" fill="none" stroke="#8a8a8a" stroke-width="1"/></svg>
<span class="t" style="left:391.0px;top:1013.7px;font-size:10.5px;line-height:10.5px;color:#d6d6d6;letter-spacing:-0.961px;">WE</span>
<div class="b" style="left:510.5px;top:1011.5px;width:6.5px;height:11.5px;background:#f00808"></div>
<svg class="ico" style="left:560.0px;top:1009.5px" width="10" height="13" viewBox="0 0 10 13"><path d="M2.6 6 V4 C2.6 0.6 7.4 0.6 7.4 4 V6" fill="none" stroke="#e8e8e8" stroke-width="1.5"/><rect x="0.8" y="5.6" width="8.4" height="6.8" rx="0.8" fill="#e8e8e8"/><rect x="4.2" y="7.6" width="1.6" height="2.8" fill="#323232"/></svg>
<svg class="ico" style="left:591px;top:828.5px;overflow:hidden" width="1017" height="198.9" viewBox="0 0 1017 198.9"><path d="M15.06 2.0 H1017" stroke="#555" stroke-width="1.4" stroke-dasharray="1.4 13.66"/><rect x="0" y="0.0" width="90.4" height="19.9" fill="#8362a9"/><rect x="105.4" y="0.0" width="90.4" height="19.9" fill="#8362a9"/><path d="M105.4 0.0 v19.9" stroke="#222" stroke-width="1.2"/><path d="M19.0 10.9 H86.9 M82.4 7.3 L86.9 10.9 L82.4 14.5" fill="none" stroke="#1a1a1a" stroke-width="1"/><path d="M124.4 10.9 H192.3 M187.8 7.3 L192.3 10.9 L187.8 14.5" fill="none" stroke="#1a1a1a" stroke-width="1"/><circle cx="7.5" cy="10.9" r="2.7" fill="#141414"/><circle cx="97.9" cy="10.9" r="2.7" fill="#141414"/><circle cx="113.0" cy="10.9" r="2.7" fill="#141414"/><circle cx="203.3" cy="10.9" r="2.7" fill="#141414"/><path d="M0 19.4 H1017" stroke="#2a2a2a" stroke-width="1.4"/><path d="M15.06 21.9 H1017" stroke="#555" stroke-width="1.4" stroke-dasharray="1.4 13.66"/><rect x="0" y="19.9" width="90.4" height="19.9" fill="#8362a9"/><rect x="105.4" y="19.9" width="90.4" height="19.9" fill="#8362a9"/><path d="M105.4 19.9 v19.9" stroke="#222" stroke-width="1.2"/><path d="M19.0 30.8 H86.9 M82.4 27.2 L86.9 30.8 L82.4 34.4" fill="none" stroke="#1a1a1a" stroke-width="1"/><path d="M124.4 30.8 H192.3 M187.8 27.2 L192.3 30.8 L187.8 34.4" fill="none" stroke="#1a1a1a" stroke-width="1"/><circle cx="7.5" cy="30.8" r="2.7" fill="#141414"/><circle cx="97.9" cy="30.8" r="2.7" fill="#141414"/><circle cx="113.0" cy="30.8" r="2.7" fill="#141414"/><circle cx="203.3" cy="30.8" r="2.7" fill="#141414"/><path d="M0 39.3 H1017" stroke="#2a2a2a" stroke-width="1.4"/><path d="M15.06 41.8 H1017" stroke="#555" stroke-width="1.4" stroke-dasharray="1.4 13.66"/><circle cx="7.5" cy="50.7" r="2.7" fill="#141414"/><path d="M0 59.2 H1017" stroke="#2a2a2a" stroke-width="1.4"/><path d="M15.06 61.7 H1017" stroke="#555" stroke-width="1.4" stroke-dasharray="1.4 13.66"/><rect x="0" y="59.7" width="90.4" height="19.9" fill="#a46d3c"/><rect x="105.4" y="59.7" width="90.4" height="19.9" fill="#a46d3c"/><path d="M105.4 59.7 v19.9" stroke="#222" stroke-width="1.2"/><path d="M19.0 70.6 H86.9 M82.4 67.0 L86.9 70.6 L82.4 74.2" fill="none" stroke="#1a1a1a" stroke-width="1"/><path d="M124.4 70.6 H192.3 M187.8 67.0 L192.3 70.6 L187.8 74.2" fill="none" stroke="#1a1a1a" stroke-width="1"/><circle cx="7.5" cy="70.6" r="2.7" fill="#141414"/><circle cx="97.9" cy="70.6" r="2.7" fill="#141414"/><circle cx="113.0" cy="70.6" r="2.7" fill="#141414"/><circle cx="203.3" cy="70.6" r="2.7" fill="#141414"/><path d="M0 79.1 H1017" stroke="#2a2a2a" stroke-width="1.4"/><path d="M15.06 81.6 H1017" stroke="#555" stroke-width="1.4" stroke-dasharray="1.4 13.66"/><circle cx="7.5" cy="90.5" r="2.7" fill="#141414"/><path d="M0 98.9 H1017" stroke="#2a2a2a" stroke-width="1.4"/><path d="M15.06 101.5 H1017" stroke="#555" stroke-width="1.4" stroke-dasharray="1.4 13.66"/><circle cx="7.5" cy="110.4" r="2.7" fill="#141414"/><path d="M0 118.8 H1017" stroke="#2a2a2a" stroke-width="1.4"/><path d="M15.06 121.3 H1017" stroke="#555" stroke-width="1.4" stroke-dasharray="1.4 13.66"/><rect x="0" y="119.3" width="90.4" height="19.9" fill="#a46d3c"/><rect x="105.4" y="119.3" width="90.4" height="19.9" fill="#a46d3c"/><path d="M105.4 119.3 v19.9" stroke="#222" stroke-width="1.2"/><path d="M19.0 130.3 H86.9 M82.4 126.7 L86.9 130.3 L82.4 133.9" fill="none" stroke="#1a1a1a" stroke-width="1"/><path d="M124.4 130.3 H192.3 M187.8 126.7 L192.3 130.3 L187.8 133.9" fill="none" stroke="#1a1a1a" stroke-width="1"/><circle cx="7.5" cy="130.3" r="2.7" fill="#141414"/><circle cx="97.9" cy="130.3" r="2.7" fill="#141414"/><circle cx="113.0" cy="130.3" r="2.7" fill="#141414"/><circle cx="203.3" cy="130.3" r="2.7" fill="#141414"/><path d="M0 138.7 H1017" stroke="#2a2a2a" stroke-width="1.4"/><path d="M15.06 141.2 H1017" stroke="#555" stroke-width="1.4" stroke-dasharray="1.4 13.66"/><circle cx="7.5" cy="150.2" r="2.7" fill="#141414"/><path d="M0 158.6 H1017" stroke="#2a2a2a" stroke-width="1.4"/><path d="M15.06 161.1 H1017" stroke="#555" stroke-width="1.4" stroke-dasharray="1.4 13.66"/><circle cx="7.5" cy="170.1" r="2.7" fill="#141414"/><path d="M0 178.5 H1017" stroke="#2a2a2a" stroke-width="1.4"/><path d="M15.06 181.0 H1017" stroke="#555" stroke-width="1.4" stroke-dasharray="1.4 13.66"/><circle cx="7.5" cy="190.0" r="2.7" fill="#141414"/><path d="M0 198.4 H1017" stroke="#2a2a2a" stroke-width="1.4"/></svg>
<div class="b" style="left:1608px;top:794px;width:9px;height:276px;background:#2c2c2c"></div>
<div class="b" style="left:657.6px;top:824px;width:2.4px;height:245px;background:rgba(72,142,216,0.85)"></div>
<svg class="ico" style="left:651.3px;top:794px" width="15" height="33" viewBox="0 0 15 33"><path d="M1.5 0 H13.5 Q14.6 0 14.6 1.2 V26 L7.5 32.4 L0.4 26 V1.2 Q0.4 0 1.5 0Z" fill="#3f8bdc"/></svg>
<span class="t" style="left:655.8px;top:816.2px;font-size:10.5px;line-height:10.5px;color:#5fa0e6;">5</span>
<div class="b" style="left:339px;top:1069px;width:1278px;height:1px;background:#262626"></div>
<div class="b" style="left:591px;top:1070px;width:1026px;height:8px;background:#4b4b4b"></div>
<div class="b" style="left:591px;top:1070px;width:89px;height:8px;background:#d2d2d2"></div><div class="b" style="left:1619px;top:42px;width:301px;height:1038px;background:#323232"></div>
<div class="b" style="left:1619px;top:42px;width:301px;height:11px;background:#2e2e2e;border-bottom:1px solid #262626"></div>
<svg class="ico" style="left:1908px;top:45px" width="9" height="6" viewBox="0 0 9 6"><path d="M0.8 0.5 L3.5 3 L0.8 5.5 M4.8 0.5 L7.5 3 L4.8 5.5" fill="none" stroke="#d0d0d0" stroke-width="1.2"/></svg>
<div class="b" style="left:1619px;top:53px;width:301px;height:20px;background:#2a2a2a"></div>
<div class="b" style="left:1683px;top:53px;width:48px;height:20px;background:#323232"></div>
<div class="b" style="left:1818px;top:54px;width:1px;height:18px;background:#343434"></div>
<div class="b" style="left:1872px;top:54px;width:1px;height:18px;background:#343434"></div>
<span class="t" style="left:1627.0px;top:57.2px;font-size:11.5px;line-height:11.5px;color:#7d7d7d;font-weight:700;letter-spacing:-1.089px;">Properties</span>
<span class="t" style="left:1691.0px;top:57.2px;font-size:11.5px;line-height:11.5px;color:#f2f2f2;font-weight:700;letter-spacing:-1.000px;">Library</span>
<span class="t" style="left:1739.0px;top:57.2px;font-size:11.5px;line-height:11.5px;color:#7d7d7d;font-weight:700;letter-spacing:-0.888px;">Motion Presets</span>
<span class="t" style="left:1826.0px;top:57.2px;font-size:11.5px;line-height:11.5px;color:#7d7d7d;font-weight:700;letter-spacing:-1.620px;">Assets</span>
<svg class="ico" style="left:1909px;top:58px" width="11" height="8" viewBox="0 0 11 8"><path d="M0 0.5 H11 M0 2.8 H11 M0 5.1 H11 M0 7.4 H11" stroke="#bdbdbd" stroke-width="1"/></svg>
<div class="b" style="left:1623px;top:78px;width:243px;height:20px;background:#2b2b2b;border:1px solid #575757;border-radius:4px"></div>
<span class="t" style="left:1633.0px;top:82.2px;font-size:11.5px;line-height:11.5px;color:#e6e6e6;letter-spacing:-0.246px;">Krodhi Rishi Character.fla</span>
<svg class="ico" style="left:1846px;top:83px" width="12" height="9" viewBox="0 0 12 9"><path d="M1.5 1.5 L6 6.5 L10.5 1.5" fill="none" stroke="#f0f0f0" stroke-width="2"/></svg>
<svg class="ico" style="left:1873px;top:84px" width="18" height="9" viewBox="0 0 18 9"><path d="M0.5 4.5 H10" stroke="#d4d4d4" stroke-width="1.6"/><circle cx="13" cy="4.5" r="3.6" fill="#d4d4d4"/></svg>
<svg class="ico" style="left:1901px;top:81px" width="16" height="16" viewBox="0 0 16 16"><rect x="1" y="1" width="9.4" height="10" fill="none" stroke="#d4d4d4" stroke-width="1.5"/><rect x="5" y="4.6" width="9.6" height="10.4" fill="#9a9a9a" stroke="#d4d4d4" stroke-width="1.4"/></svg>
<div class="b" style="left:1619px;top:102px;width:301px;height:140px;background:#ffffff;overflow:hidden"><svg style="left:0;top:0" width="301" height="140" viewBox="1619 102 301 140"><defs><radialGradient id="irisp" cx="1777" cy="178" r="62" gradientUnits="userSpaceOnUse"><stop offset="0" stop-color="#000"/><stop offset="0.55" stop-color="#000" stop-opacity="1"/><stop offset="0.76" stop-color="#0c0200" stop-opacity="0.5"/><stop offset="1" stop-color="#3a1000" stop-opacity="0"/></radialGradient><clipPath id="cpi"><ellipse cx="1771.5" cy="172.5" rx="66" ry="69.5"/></clipPath></defs><ellipse cx="1771.5" cy="172.5" rx="66" ry="69.5" fill="#6b2100"/><g clip-path="url(#cpi)"><circle cx="1777" cy="178" r="62" fill="url(#irisp)"/><circle cx="1771.8" cy="172.5" r="36" fill="#000"/><ellipse cx="1806" cy="136.5" rx="28" ry="29" fill="#fff" fill-opacity="0.66"/><circle cx="1750" cy="207.3" r="14.3" fill="#fff" fill-opacity="0.66"/></g></svg></div>
<div class="b" style="left:1619px;top:242px;width:301px;height:6px;background:#474747"></div>
<span class="t" style="left:1623.0px;top:255.0px;font-size:11px;line-height:11px;color:#dcdcdc;letter-spacing:0.178px;">39 items</span>
<div class="b" style="left:1785px;top:249.5px;width:140px;height:21px;background:#1f1f1f;border:1px solid #7a7a7a;border-radius:5px"></div>
<svg class="ico" style="left:1792px;top:252px" width="16" height="16" viewBox="0 0 16 16"><circle cx="6.4" cy="6.4" r="4.6" fill="none" stroke="#f0f0f0" stroke-width="1.5"/><path d="M9.8 9.8 L14.4 14.6" stroke="#f0f0f0" stroke-width="1.8"/></svg>
<span class="t" style="left:1635.0px;top:284.0px;font-size:11px;line-height:11px;color:#d8d8d8;letter-spacing:-0.836px;">Name</span>
<svg class="ico" style="left:1674px;top:283px" width="9" height="11" viewBox="0 0 9 11"><path d="M4.5 10.6 V2" stroke="#e0e0e0" stroke-width="1.6"/><path d="M0.8 4.8 L4.5 0.8 L8.2 4.8" fill="none" stroke="#e0e0e0" stroke-width="1.6"/></svg>
<div class="b" style="left:1851px;top:273px;width:1px;height:31px;background:#444"></div>
<span class="t" style="left:1867.0px;top:284.0px;font-size:11px;line-height:11px;color:#d8d8d8;letter-spacing:-0.650px;">Linkage</span>
<div class="b" style="left:1619.5px;top:304.5px;width:297px;height:758px;background:#2f2f2f;border-top:1px solid #414141;border-left:1px solid #3a3a3a;border-radius:4px 0 0 0"></div>
<svg class="ico" style="left:1644.0px;top:311.3px" width="15" height="13" viewBox="0 0 15 13"><rect x="0.7" y="0.7" width="13.6" height="11.6" fill="none" stroke="#d4d4d4" stroke-width="1.4"/><path d="M1.4 10.6 L5 5.8 L7.6 8.6 L10 6.6 L13.6 10 V11.6 H1.4 Z" fill="#d4d4d4"/><rect x="9.6" y="2.6" width="2.4" height="2.2" fill="#d4d4d4"/></svg>
<span class="t" style="left:1665.5px;top:313.3px;font-size:11px;line-height:11px;color:#d6d6d6;letter-spacing:0.197px;">Bitmap 2</span>
<svg class="ico" style="left:1644.0px;top:337.44px" width="15" height="13" viewBox="0 0 15 13"><rect x="0.7" y="0.7" width="13.6" height="11.6" fill="none" stroke="#d4d4d4" stroke-width="1.4"/><path d="M1.4 10.6 L5 5.8 L7.6 8.6 L10 6.6 L13.6 10 V11.6 H1.4 Z" fill="#d4d4d4"/><rect x="9.6" y="2.6" width="2.4" height="2.2" fill="#d4d4d4"/></svg>
<span class="t" style="left:1665.5px;top:339.4px;font-size:11px;line-height:11px;color:#d6d6d6;letter-spacing:0.197px;">Bitmap 3</span>
<svg class="ico" style="left:1644.0px;top:363.58000000000004px" width="15" height="13" viewBox="0 0 15 13"><rect x="0.7" y="0.7" width="13.6" height="11.6" fill="none" stroke="#d4d4d4" stroke-width="1.4"/><path d="M1.4 10.6 L5 5.8 L7.6 8.6 L10 6.6 L13.6 10 V11.6 H1.4 Z" fill="#d4d4d4"/><rect x="9.6" y="2.6" width="2.4" height="2.2" fill="#d4d4d4"/></svg>
<span class="t" style="left:1665.5px;top:365.6px;font-size:11px;line-height:11px;color:#d6d6d6;letter-spacing:-0.331px;">e5726d67-35f7-47cc-bcc4-4d6a1933...</span>
<svg class="ico" style="left:1643px;top:389.22px" width="18" height="16" viewBox="0 0 18 16"><path d="M1.2 9.2 L10.2 1.2 L10.2 5" fill="none" stroke="#c6c6c6" stroke-width="1.4" stroke-linejoin="round"/><rect x="8.2" y="5.2" width="8.2" height="8" fill="#c6c6c6"/><circle cx="7.2" cy="11" r="3.6" fill="#2f2f2f" stroke="#c6c6c6" stroke-width="1.5"/><path d="M1.2 9.2 L4 9.4" stroke="#c6c6c6" stroke-width="1.4"/></svg>
<span class="t" style="left:1665.5px;top:391.7px;font-size:11px;line-height:11px;color:#d6d6d6;letter-spacing:-0.037px;">KR B Arm</span>
<svg class="ico" style="left:1643px;top:415.36px" width="18" height="16" viewBox="0 0 18 16"><path d="M1.2 9.2 L10.2 1.2 L10.2 5" fill="none" stroke="#c6c6c6" stroke-width="1.4" stroke-linejoin="round"/><rect x="8.2" y="5.2" width="8.2" height="8" fill="#c6c6c6"/><circle cx="7.2" cy="11" r="3.6" fill="#2f2f2f" stroke="#c6c6c6" stroke-width="1.5"/><path d="M1.2 9.2 L4 9.4" stroke="#c6c6c6" stroke-width="1.4"/></svg>
<span class="t" style="left:1665.5px;top:417.9px;font-size:11px;line-height:11px;color:#d6d6d6;letter-spacing:-0.269px;">KR B Band</span>
<svg class="ico" style="left:1643px;top:441.5px" width="18" height="16" viewBox="0 0 18 16"><path d="M1.2 9.2 L10.2 1.2 L10.2 5" fill="none" stroke="#c6c6c6" stroke-width="1.4" stroke-linejoin="round"/><rect x="8.2" y="5.2" width="8.2" height="8" fill="#c6c6c6"/><circle cx="7.2" cy="11" r="3.6" fill="#2f2f2f" stroke="#c6c6c6" stroke-width="1.5"/><path d="M1.2 9.2 L4 9.4" stroke="#c6c6c6" stroke-width="1.4"/></svg>
<span class="t" style="left:1665.5px;top:444.0px;font-size:11px;line-height:11px;color:#d6d6d6;letter-spacing:-0.180px;">KR B Dn Hand</span>
<svg class="ico" style="left:1643px;top:467.64px" width="18" height="16" viewBox="0 0 18 16"><path d="M1.2 9.2 L10.2 1.2 L10.2 5" fill="none" stroke="#c6c6c6" stroke-width="1.4" stroke-linejoin="round"/><rect x="8.2" y="5.2" width="8.2" height="8" fill="#c6c6c6"/><circle cx="7.2" cy="11" r="3.6" fill="#2f2f2f" stroke="#c6c6c6" stroke-width="1.5"/><path d="M1.2 9.2 L4 9.4" stroke="#c6c6c6" stroke-width="1.4"/></svg>
<span class="t" style="left:1665.5px;top:470.1px;font-size:11px;line-height:11px;color:#d6d6d6;letter-spacing:-0.200px;">KR B Dn Leg</span>
<svg class="ico" style="left:1643px;top:493.78000000000003px" width="18" height="16" viewBox="0 0 18 16"><path d="M1.2 9.2 L10.2 1.2 L10.2 5" fill="none" stroke="#c6c6c6" stroke-width="1.4" stroke-linejoin="round"/><rect x="8.2" y="5.2" width="8.2" height="8" fill="#c6c6c6"/><circle cx="7.2" cy="11" r="3.6" fill="#2f2f2f" stroke="#c6c6c6" stroke-width="1.5"/><path d="M1.2 9.2 L4 9.4" stroke="#c6c6c6" stroke-width="1.4"/></svg>
<span class="t" style="left:1665.5px;top:496.3px;font-size:11px;line-height:11px;color:#d6d6d6;letter-spacing:-0.128px;">KR B Eyebrow</span>
<svg class="ico" style="left:1643px;top:519.9200000000001px" width="18" height="16" viewBox="0 0 18 16"><path d="M1.2 9.2 L10.2 1.2 L10.2 5" fill="none" stroke="#c6c6c6" stroke-width="1.4" stroke-linejoin="round"/><rect x="8.2" y="5.2" width="8.2" height="8" fill="#c6c6c6"/><circle cx="7.2" cy="11" r="3.6" fill="#2f2f2f" stroke="#c6c6c6" stroke-width="1.5"/><path d="M1.2 9.2 L4 9.4" stroke="#c6c6c6" stroke-width="1.4"/></svg>
<span class="t" style="left:1665.5px;top:522.4px;font-size:11px;line-height:11px;color:#d6d6d6;letter-spacing:-0.118px;">KR B Eyebrow In</span>
<svg class="ico" style="left:1643px;top:546.06px" width="18" height="16" viewBox="0 0 18 16"><path d="M1.2 9.2 L10.2 1.2 L10.2 5" fill="none" stroke="#c6c6c6" stroke-width="1.4" stroke-linejoin="round"/><rect x="8.2" y="5.2" width="8.2" height="8" fill="#c6c6c6"/><circle cx="7.2" cy="11" r="3.6" fill="#2f2f2f" stroke="#c6c6c6" stroke-width="1.5"/><path d="M1.2 9.2 L4 9.4" stroke="#c6c6c6" stroke-width="1.4"/></svg>
<span class="t" style="left:1665.5px;top:548.6px;font-size:11px;line-height:11px;color:#d6d6d6;letter-spacing:-0.101px;">KR B Hair</span>
<svg class="ico" style="left:1643px;top:572.2px" width="18" height="16" viewBox="0 0 18 16"><path d="M1.2 9.2 L10.2 1.2 L10.2 5" fill="none" stroke="#c6c6c6" stroke-width="1.4" stroke-linejoin="round"/><rect x="8.2" y="5.2" width="8.2" height="8" fill="#c6c6c6"/><circle cx="7.2" cy="11" r="3.6" fill="#2f2f2f" stroke="#c6c6c6" stroke-width="1.5"/><path d="M1.2 9.2 L4 9.4" stroke="#c6c6c6" stroke-width="1.4"/></svg>
<span class="t" style="left:1665.5px;top:574.7px;font-size:11px;line-height:11px;color:#d6d6d6;letter-spacing:-0.226px;">KR B Hand</span>
<svg class="ico" style="left:1643px;top:598.34px" width="18" height="16" viewBox="0 0 18 16"><path d="M1.2 9.2 L10.2 1.2 L10.2 5" fill="none" stroke="#c6c6c6" stroke-width="1.4" stroke-linejoin="round"/><rect x="8.2" y="5.2" width="8.2" height="8" fill="#c6c6c6"/><circle cx="7.2" cy="11" r="3.6" fill="#2f2f2f" stroke="#c6c6c6" stroke-width="1.5"/><path d="M1.2 9.2 L4 9.4" stroke="#c6c6c6" stroke-width="1.4"/></svg>
<span class="t" style="left:1665.5px;top:600.8px;font-size:11px;line-height:11px;color:#d6d6d6;letter-spacing:-0.262px;">KR B Leg</span>
<svg class="ico" style="left:1643px;top:624.48px" width="18" height="16" viewBox="0 0 18 16"><path d="M1.2 9.2 L10.2 1.2 L10.2 5" fill="none" stroke="#c6c6c6" stroke-width="1.4" stroke-linejoin="round"/><rect x="8.2" y="5.2" width="8.2" height="8" fill="#c6c6c6"/><circle cx="7.2" cy="11" r="3.6" fill="#2f2f2f" stroke="#c6c6c6" stroke-width="1.5"/><path d="M1.2 9.2 L4 9.4" stroke="#c6c6c6" stroke-width="1.4"/></svg>
<span class="t" style="left:1665.5px;top:627.0px;font-size:11px;line-height:11px;color:#d6d6d6;letter-spacing:-0.101px;">KR B Part</span>
<svg class="ico" style="left:1643px;top:650.62px" width="18" height="16" viewBox="0 0 18 16"><path d="M1.2 9.2 L10.2 1.2 L10.2 5" fill="none" stroke="#c6c6c6" stroke-width="1.4" stroke-linejoin="round"/><rect x="8.2" y="5.2" width="8.2" height="8" fill="#c6c6c6"/><circle cx="7.2" cy="11" r="3.6" fill="#2f2f2f" stroke="#c6c6c6" stroke-width="1.5"/><path d="M1.2 9.2 L4 9.4" stroke="#c6c6c6" stroke-width="1.4"/></svg>
<span class="t" style="left:1665.5px;top:653.1px;font-size:11px;line-height:11px;color:#d6d6d6;letter-spacing:-0.180px;">KR B Up Hand</span>
<svg class="ico" style="left:1643px;top:676.76px" width="18" height="16" viewBox="0 0 18 16"><path d="M1.2 9.2 L10.2 1.2 L10.2 5" fill="none" stroke="#c6c6c6" stroke-width="1.4" stroke-linejoin="round"/><rect x="8.2" y="5.2" width="8.2" height="8" fill="#c6c6c6"/><circle cx="7.2" cy="11" r="3.6" fill="#2f2f2f" stroke="#c6c6c6" stroke-width="1.5"/><path d="M1.2 9.2 L4 9.4" stroke="#c6c6c6" stroke-width="1.4"/></svg>
<span class="t" style="left:1665.5px;top:679.3px;font-size:11px;line-height:11px;color:#d6d6d6;letter-spacing:0.033px;">KR Belt and Dhoti</span>
<svg class="ico" style="left:1643px;top:702.9000000000001px" width="18" height="16" viewBox="0 0 18 16"><path d="M1.2 9.2 L10.2 1.2 L10.2 5" fill="none" stroke="#c6c6c6" stroke-width="1.4" stroke-linejoin="round"/><rect x="8.2" y="5.2" width="8.2" height="8" fill="#c6c6c6"/><circle cx="7.2" cy="11" r="3.6" fill="#2f2f2f" stroke="#c6c6c6" stroke-width="1.5"/><path d="M1.2 9.2 L4 9.4" stroke="#c6c6c6" stroke-width="1.4"/></svg>
<span class="t" style="left:1665.5px;top:705.4px;font-size:11px;line-height:11px;color:#d6d6d6;letter-spacing:0.058px;">KR Dhoti Part</span>
<svg class="ico" style="left:1643px;top:729.04px" width="18" height="16" viewBox="0 0 18 16"><path d="M1.2 9.2 L10.2 1.2 L10.2 5" fill="none" stroke="#c6c6c6" stroke-width="1.4" stroke-linejoin="round"/><rect x="8.2" y="5.2" width="8.2" height="8" fill="#c6c6c6"/><circle cx="7.2" cy="11" r="3.6" fill="#2f2f2f" stroke="#c6c6c6" stroke-width="1.5"/><path d="M1.2 9.2 L4 9.4" stroke="#c6c6c6" stroke-width="1.4"/></svg>
<span class="t" style="left:1665.5px;top:731.5px;font-size:11px;line-height:11px;color:#d6d6d6;letter-spacing:-0.411px;">KR Ear</span>
<svg class="ico" style="left:1643px;top:755.1800000000001px" width="18" height="16" viewBox="0 0 18 16"><path d="M1.2 9.2 L10.2 1.2 L10.2 5" fill="none" stroke="#c6c6c6" stroke-width="1.4" stroke-linejoin="round"/><rect x="8.2" y="5.2" width="8.2" height="8" fill="#c6c6c6"/><circle cx="7.2" cy="11" r="3.6" fill="#2f2f2f" stroke="#c6c6c6" stroke-width="1.5"/><path d="M1.2 9.2 L4 9.4" stroke="#c6c6c6" stroke-width="1.4"/></svg>
<span class="t" style="left:1665.5px;top:757.7px;font-size:11px;line-height:11px;color:#d6d6d6;letter-spacing:-0.400px;">KR Eyes</span>
<svg class="ico" style="left:1643px;top:781.3199999999999px" width="18" height="16" viewBox="0 0 18 16"><path d="M1.2 9.2 L10.2 1.2 L10.2 5" fill="none" stroke="#c6c6c6" stroke-width="1.4" stroke-linejoin="round"/><rect x="8.2" y="5.2" width="8.2" height="8" fill="#c6c6c6"/><circle cx="7.2" cy="11" r="3.6" fill="#2f2f2f" stroke="#c6c6c6" stroke-width="1.5"/><path d="M1.2 9.2 L4 9.4" stroke="#c6c6c6" stroke-width="1.4"/></svg>
<span class="t" style="left:1665.5px;top:783.8px;font-size:11px;line-height:11px;color:#d6d6d6;letter-spacing:-0.084px;">KR F Arm</span>
<svg class="ico" style="left:1643px;top:807.46px" width="18" height="16" viewBox="0 0 18 16"><path d="M1.2 9.2 L10.2 1.2 L10.2 5" fill="none" stroke="#c6c6c6" stroke-width="1.4" stroke-linejoin="round"/><rect x="8.2" y="5.2" width="8.2" height="8" fill="#c6c6c6"/><circle cx="7.2" cy="11" r="3.6" fill="#2f2f2f" stroke="#c6c6c6" stroke-width="1.5"/><path d="M1.2 9.2 L4 9.4" stroke="#c6c6c6" stroke-width="1.4"/></svg>
<span class="t" style="left:1665.5px;top:810.0px;font-size:11px;line-height:11px;color:#d6d6d6;letter-spacing:-0.312px;">KR F Band</span>
<svg class="ico" style="left:1643px;top:833.5999999999999px" width="18" height="16" viewBox="0 0 18 16"><path d="M1.2 9.2 L10.2 1.2 L10.2 5" fill="none" stroke="#c6c6c6" stroke-width="1.4" stroke-linejoin="round"/><rect x="8.2" y="5.2" width="8.2" height="8" fill="#c6c6c6"/><circle cx="7.2" cy="11" r="3.6" fill="#2f2f2f" stroke="#c6c6c6" stroke-width="1.5"/><path d="M1.2 9.2 L4 9.4" stroke="#c6c6c6" stroke-width="1.4"/></svg>
<span class="t" style="left:1665.5px;top:836.1px;font-size:11px;line-height:11px;color:#d6d6d6;letter-spacing:-0.080px;">KR F Dhoti</span>
<svg class="ico" style="left:1643px;top:859.74px" width="18" height="16" viewBox="0 0 18 16"><path d="M1.2 9.2 L10.2 1.2 L10.2 5" fill="none" stroke="#c6c6c6" stroke-width="1.4" stroke-linejoin="round"/><rect x="8.2" y="5.2" width="8.2" height="8" fill="#c6c6c6"/><circle cx="7.2" cy="11" r="3.6" fill="#2f2f2f" stroke="#c6c6c6" stroke-width="1.5"/><path d="M1.2 9.2 L4 9.4" stroke="#c6c6c6" stroke-width="1.4"/></svg>
<span class="t" style="left:1665.5px;top:862.2px;font-size:11px;line-height:11px;color:#d6d6d6;letter-spacing:-0.211px;">KR F Dn Hand</span>
<svg class="ico" style="left:1643px;top:885.8800000000001px" width="18" height="16" viewBox="0 0 18 16"><path d="M1.2 9.2 L10.2 1.2 L10.2 5" fill="none" stroke="#c6c6c6" stroke-width="1.4" stroke-linejoin="round"/><rect x="8.2" y="5.2" width="8.2" height="8" fill="#c6c6c6"/><circle cx="7.2" cy="11" r="3.6" fill="#2f2f2f" stroke="#c6c6c6" stroke-width="1.5"/><path d="M1.2 9.2 L4 9.4" stroke="#c6c6c6" stroke-width="1.4"/></svg>
<span class="t" style="left:1665.5px;top:888.4px;font-size:11px;line-height:11px;color:#d6d6d6;letter-spacing:-0.236px;">KR F Dn Leg</span>
<svg class="ico" style="left:1643px;top:912.02px" width="18" height="16" viewBox="0 0 18 16"><path d="M1.2 9.2 L10.2 1.2 L10.2 5" fill="none" stroke="#c6c6c6" stroke-width="1.4" stroke-linejoin="round"/><rect x="8.2" y="5.2" width="8.2" height="8" fill="#c6c6c6"/><circle cx="7.2" cy="11" r="3.6" fill="#2f2f2f" stroke="#c6c6c6" stroke-width="1.5"/><path d="M1.2 9.2 L4 9.4" stroke="#c6c6c6" stroke-width="1.4"/></svg>
<span class="t" style="left:1665.5px;top:914.5px;font-size:11px;line-height:11px;color:#d6d6d6;letter-spacing:-0.184px;">KR F Eyeball</span>
<div class="b" style="left:1620px;top:932.9px;width:295px;height:24.8px;background:#35475b"></div>
<svg class="ico" style="left:1643px;top:938.1600000000001px" width="18" height="16" viewBox="0 0 18 16"><path d="M1.2 9.2 L10.2 1.2 L10.2 5" fill="none" stroke="#c6c6c6" stroke-width="1.4" stroke-linejoin="round"/><rect x="8.2" y="5.2" width="8.2" height="8" fill="#c6c6c6"/><circle cx="7.2" cy="11" r="3.6" fill="#35475b" stroke="#c6c6c6" stroke-width="1.5"/><path d="M1.2 9.2 L4 9.4" stroke="#c6c6c6" stroke-width="1.4"/></svg>
<span class="t" style="left:1665.5px;top:940.7px;font-size:11px;line-height:11px;color:#d6d6d6;letter-spacing:-0.161px;">KR F Eyeball In</span>
<svg class="ico" style="left:1643px;top:964.3px" width="18" height="16" viewBox="0 0 18 16"><path d="M1.2 9.2 L10.2 1.2 L10.2 5" fill="none" stroke="#c6c6c6" stroke-width="1.4" stroke-linejoin="round"/><rect x="8.2" y="5.2" width="8.2" height="8" fill="#c6c6c6"/><circle cx="7.2" cy="11" r="3.6" fill="#2f2f2f" stroke="#c6c6c6" stroke-width="1.5"/><path d="M1.2 9.2 L4 9.4" stroke="#c6c6c6" stroke-width="1.4"/></svg>
<span class="t" style="left:1665.5px;top:966.8px;font-size:11px;line-height:11px;color:#d6d6d6;letter-spacing:-0.160px;">KR F Eyebrow</span>
<svg class="ico" style="left:1643px;top:990.44px" width="18" height="16" viewBox="0 0 18 16"><path d="M1.2 9.2 L10.2 1.2 L10.2 5" fill="none" stroke="#c6c6c6" stroke-width="1.4" stroke-linejoin="round"/><rect x="8.2" y="5.2" width="8.2" height="8" fill="#c6c6c6"/><circle cx="7.2" cy="11" r="3.6" fill="#2f2f2f" stroke="#c6c6c6" stroke-width="1.5"/><path d="M1.2 9.2 L4 9.4" stroke="#c6c6c6" stroke-width="1.4"/></svg>
<span class="t" style="left:1665.5px;top:992.9px;font-size:11px;line-height:11px;color:#d6d6d6;letter-spacing:-0.076px;">KR F Eyebrow In</span>
<svg class="ico" style="left:1643px;top:1016.5799999999999px" width="18" height="16" viewBox="0 0 18 16"><path d="M1.2 9.2 L10.2 1.2 L10.2 5" fill="none" stroke="#c6c6c6" stroke-width="1.4" stroke-linejoin="round"/><rect x="8.2" y="5.2" width="8.2" height="8" fill="#c6c6c6"/><circle cx="7.2" cy="11" r="3.6" fill="#2f2f2f" stroke="#c6c6c6" stroke-width="1.5"/><path d="M1.2 9.2 L4 9.4" stroke="#c6c6c6" stroke-width="1.4"/></svg>
<span class="t" style="left:1665.5px;top:1019.1px;font-size:11px;line-height:11px;color:#d6d6d6;letter-spacing:-0.269px;">KR F Hand</span>
<svg class="ico" style="left:1643px;top:1042.72px" width="18" height="16" viewBox="0 0 18 16"><path d="M1.2 9.2 L10.2 1.2 L10.2 5" fill="none" stroke="#c6c6c6" stroke-width="1.4" stroke-linejoin="round"/><rect x="8.2" y="5.2" width="8.2" height="8" fill="#c6c6c6"/><circle cx="7.2" cy="11" r="3.6" fill="#2f2f2f" stroke="#c6c6c6" stroke-width="1.5"/><path d="M1.2 9.2 L4 9.4" stroke="#c6c6c6" stroke-width="1.4"/></svg>
<span class="t" style="left:1665.5px;top:1045.2px;font-size:11px;line-height:11px;color:#d6d6d6;letter-spacing:-0.309px;">KR F Leg</span>
<div class="b" style="left:1915px;top:305px;width:5px;height:757px;background:#474747"></div>
<div class="b" style="left:1915px;top:306px;width:5px;height:573px;background:#c6c6c6"></div>
<div class="b" style="left:1619px;top:1062px;width:301px;height:18px;background:#323232"></div>
<svg class="ico" style="left:1621px;top:1063px" width="13" height="13" viewBox="0 0 13 13"><rect x="0.8" y="0.8" width="11.4" height="11.4" fill="none" stroke="#d4d4d4" stroke-width="1.2"/><path d="M6.5 3.4 V9.6 M3.4 6.5 H9.6" stroke="#d4d4d4" stroke-width="1.3"/></svg>
<svg class="ico" style="left:1636px;top:1064px" width="15" height="12" viewBox="0 0 15 12"><path d="M0.5 2.4 C0.5 1 1.2 0.8 2 0.8 H5 L6.6 2.4 H13.4 C14.2 2.4 14.5 2.8 14.5 3.6 V11.4 H0.5 Z" fill="#d4d4d4"/></svg>
<svg class="ico" style="left:1653px;top:1063px" width="13" height="13" viewBox="0 0 13 13"><circle cx="6.5" cy="6.5" r="6" fill="#d4d4d4"/><rect x="5.6" y="5.4" width="1.9" height="4.8" fill="#323232"/><circle cx="6.5" cy="3.4" r="1.1" fill="#323232"/></svg>
<svg class="ico" style="left:1670px;top:1062px" width="12" height="14" viewBox="0 0 12 14"><path d="M0.5 2.6 H11.5" stroke="#d4d4d4" stroke-width="1.4"/><path d="M4 2 V0.8 H8 V2" fill="none" stroke="#d4d4d4" stroke-width="1.1"/><path d="M1.4 4 H10.6 L9.8 13.4 H2.2 Z" fill="none" stroke="#d4d4d4" stroke-width="1.2"/><path d="M4.4 5.6 V11.8 M6 5.6 V11.8 M7.6 5.6 V11.8" stroke="#d4d4d4" stroke-width="0.9"/></svg>
<div class="b" style="left:1684px;top:1070.5px;width:231px;height:7px;background:#3e3e3e"></div>
<div class="b" style="left:1684px;top:1070.5px;width:117px;height:7px;background:#d2d2d2"></div><svg style="left:0;top:0;overflow:hidden;pointer-events:none" width="1920" height="1080" viewBox="0 0 1920 1080"><g transform="translate(170 -10) rotate(-45) scale(0.53) translate(-98.5 -114.0)" opacity="0.1" fill="#000"><path d="M46 137 V91 Q46 68 69 68 H128 Q151 68 151 91 V137 H164 V158 H151 L147 181.5 H120 V158 H77 V181.5 H52 L48 158 H34 V137 Z M81 91 H116 Q120 91 120 95 V137 H77 V95 Q77 91 81 91 Z" fill-rule="evenodd"/><text x="171.6 224.7 274.1" y="162.5" font-family="'Liberation Sans',sans-serif" font-weight="700" font-size="75" stroke="#000" stroke-width="4" stroke-linejoin="round">yug</text><g transform="translate(173.5 43.5) rotate(36)"><path d="M-8.5 -13 L8.5 -13 L10.5 -2 L0 20 L-10.5 -2 Z"/><rect x="-8.5" y="-20.5" width="17" height="6"/></g><path d="M132.6 47.5 C150 44 150 62 157.2 65 C164 70 170 80 182.2 78" fill="none" stroke="#000" stroke-width="1.4"/><circle cx="132.6" cy="47.5" r="2.2"/><circle cx="157.2" cy="65" r="2.2"/><circle cx="182.2" cy="78" r="2.2"/></g><g transform="translate(468 20) rotate(-45) scale(0.53) translate(-98.5 -114.0)" opacity="0.1" fill="#000"><path d="M46 137 V91 Q46 68 69 68 H128 Q151 68 151 91 V137 H164 V158 H151 L147 181.5 H120 V158 H77 V181.5 H52 L48 158 H34 V137 Z M81 91 H116 Q120 91 120 95 V137 H77 V95 Q77 91 81 91 Z" fill-rule="evenodd"/><text x="171.6 224.7 274.1" y="162.5" font-family="'Liberation Sans',sans-serif" font-weight="700" font-size="75" stroke="#000" stroke-width="4" stroke-linejoin="round">yug</text><g transform="translate(173.5 43.5) rotate(36)"><path d="M-8.5 -13 L8.5 -13 L10.5 -2 L0 20 L-10.5 -2 Z"/><rect x="-8.5" y="-20.5" width="17" height="6"/></g><path d="M132.6 47.5 C150 44 150 62 157.2 65 C164 70 170 80 182.2 78" fill="none" stroke="#000" stroke-width="1.4"/><circle cx="132.6" cy="47.5" r="2.2"/><circle cx="157.2" cy="65" r="2.2"/><circle cx="182.2" cy="78" r="2.2"/></g><g transform="translate(769 49) rotate(-45) scale(0.53) translate(-98.5 -114.0)" opacity="0.1" fill="#000"><path d="M46 137 V91 Q46 68 69 68 H128 Q151 68 151 91 V137 H164 V158 H151 L147 181.5 H120 V158 H77 V181.5 H52 L48 158 H34 V137 Z M81 91 H116 Q120 91 120 95 V137 H77 V95 Q77 91 81 91 Z" fill-rule="evenodd"/><text x="171.6 224.7 274.1" y="162.5" font-family="'Liberation Sans',sans-serif" font-weight="700" font-size="75" stroke="#000" stroke-width="4" stroke-linejoin="round">yug</text><g transform="translate(173.5 43.5) rotate(36)"><path d="M-8.5 -13 L8.5 -13 L10.5 -2 L0 20 L-10.5 -2 Z"/><rect x="-8.5" y="-20.5" width="17" height="6"/></g><path d="M132.6 47.5 C150 44 150 62 157.2 65 C164 70 170 80 182.2 78" fill="none" stroke="#000" stroke-width="1.4"/><circle cx="132.6" cy="47.5" r="2.2"/><circle cx="157.2" cy="65" r="2.2"/><circle cx="182.2" cy="78" r="2.2"/></g><g transform="translate(1070 78) rotate(-45) scale(0.53) translate(-98.5 -114.0)" opacity="0.1" fill="#000"><path d="M46 137 V91 Q46 68 69 68 H128 Q151 68 151 91 V137 H164 V158 H151 L147 181.5 H120 V158 H77 V181.5 H52 L48 158 H34 V137 Z M81 91 H116 Q120 91 120 95 V137 H77 V95 Q77 91 81 91 Z" fill-rule="evenodd"/><text x="171.6 224.7 274.1" y="162.5" font-family="'Liberation Sans',sans-serif" font-weight="700" font-size="75" stroke="#000" stroke-width="4" stroke-linejoin="round">yug</text><g transform="translate(173.5 43.5) rotate(36)"><path d="M-8.5 -13 L8.5 -13 L10.5 -2 L0 20 L-10.5 -2 Z"/><rect x="-8.5" y="-20.5" width="17" height="6"/></g><path d="M132.6 47.5 C150 44 150 62 157.2 65 C164 70 170 80 182.2 78" fill="none" stroke="#000" stroke-width="1.4"/><circle cx="132.6" cy="47.5" r="2.2"/><circle cx="157.2" cy="65" r="2.2"/><circle cx="182.2" cy="78" r="2.2"/></g><g transform="translate(1365 107) rotate(-45) scale(0.53) translate(-98.5 -114.0)" opacity="0.1" fill="#000"><path d="M46 137 V91 Q46 68 69 68 H128 Q151 68 151 91 V137 H164 V158 H151 L147 181.5 H120 V158 H77 V181.5 H52 L48 158 H34 V137 Z M81 91 H116 Q120 91 120 95 V137 H77 V95 Q77 91 81 91 Z" fill-rule="evenodd"/><text x="171.6 224.7 274.1" y="162.5" font-family="'Liberation Sans',sans-serif" font-weight="700" font-size="75" stroke="#000" stroke-width="4" stroke-linejoin="round">yug</text><g transform="translate(173.5 43.5) rotate(36)"><path d="M-8.5 -13 L8.5 -13 L10.5 -2 L0 20 L-10.5 -2 Z"/><rect x="-8.5" y="-20.5" width="17" height="6"/></g><path d="M132.6 47.5 C150 44 150 62 157.2 65 C164 70 170 80 182.2 78" fill="none" stroke="#000" stroke-width="1.4"/><circle cx="132.6" cy="47.5" r="2.2"/><circle cx="157.2" cy="65" r="2.2"/><circle cx="182.2" cy="78" r="2.2"/></g><g transform="translate(1665 137) rotate(-45) scale(0.53) translate(-98.5 -114.0)" opacity="0.1" fill="#000"><path d="M46 137 V91 Q46 68 69 68 H128 Q151 68 151 91 V137 H164 V158 H151 L147 181.5 H120 V158 H77 V181.5 H52 L48 158 H34 V137 Z M81 91 H116 Q120 91 120 95 V137 H77 V95 Q77 91 81 91 Z" fill-rule="evenodd"/><text x="171.6 224.7 274.1" y="162.5" font-family="'Liberation Sans',sans-serif" font-weight="700" font-size="75" stroke="#000" stroke-width="4" stroke-linejoin="round">yug</text><g transform="translate(173.5 43.5) rotate(36)"><path d="M-8.5 -13 L8.5 -13 L10.5 -2 L0 20 L-10.5 -2 Z"/><rect x="-8.5" y="-20.5" width="17" height="6"/></g><path d="M132.6 47.5 C150 44 150 62 157.2 65 C164 70 170 80 182.2 78" fill="none" stroke="#000" stroke-width="1.4"/><circle cx="132.6" cy="47.5" r="2.2"/><circle cx="157.2" cy="65" r="2.2"/><circle cx="182.2" cy="78" r="2.2"/></g><g transform="translate(-90 262) rotate(-45) scale(0.53) translate(-98.5 -114.0)" opacity="0.1" fill="#000"><path d="M46 137 V91 Q46 68 69 68 H128 Q151 68 151 91 V137 H164 V158 H151 L147 181.5 H120 V158 H77 V181.5 H52 L48 158 H34 V137 Z M81 91 H116 Q120 91 120 95 V137 H77 V95 Q77 91 81 91 Z" fill-rule="evenodd"/><text x="171.6 224.7 274.1" y="162.5" font-family="'Liberation Sans',sans-serif" font-weight="700" font-size="75" stroke="#000" stroke-width="4" stroke-linejoin="round">yug</text><g transform="translate(173.5 43.5) rotate(36)"><path d="M-8.5 -13 L8.5 -13 L10.5 -2 L0 20 L-10.5 -2 Z"/><rect x="-8.5" y="-20.5" width="17" height="6"/></g><path d="M132.6 47.5 C150 44 150 62 157.2 65 C164 70 170 80 182.2 78" fill="none" stroke="#000" stroke-width="1.4"/><circle cx="132.6" cy="47.5" r="2.2"/><circle cx="157.2" cy="65" r="2.2"/><circle cx="182.2" cy="78" r="2.2"/></g><g transform="translate(210 290) rotate(-45) scale(0.53) translate(-98.5 -114.0)" opacity="0.1" fill="#000"><path d="M46 137 V91 Q46 68 69 68 H128 Q151 68 151 91 V137 H164 V158 H151 L147 181.5 H120 V158 H77 V181.5 H52 L48 158 H34 V137 Z M81 91 H116 Q120 91 120 95 V137 H77 V95 Q77 91 81 91 Z" fill-rule="evenodd"/><text x="171.6 224.7 274.1" y="162.5" font-family="'Liberation Sans',sans-serif" font-weight="700" font-size="75" stroke="#000" stroke-width="4" stroke-linejoin="round">yug</text><g transform="translate(173.5 43.5) rotate(36)"><path d="M-8.5 -13 L8.5 -13 L10.5 -2 L0 20 L-10.5 -2 Z"/><rect x="-8.5" y="-20.5" width="17" height="6"/></g><path d="M132.6 47.5 C150 44 150 62 157.2 65 C164 70 170 80 182.2 78" fill="none" stroke="#000" stroke-width="1.4"/><circle cx="132.6" cy="47.5" r="2.2"/><circle cx="157.2" cy="65" r="2.2"/><circle cx="182.2" cy="78" r="2.2"/></g><g transform="translate(499 320) rotate(-45) scale(0.53) translate(-98.5 -114.0)" opacity="0.1" fill="#000"><path d="M46 137 V91 Q46 68 69 68 H128 Q151 68 151 91 V137 H164 V158 H151 L147 181.5 H120 V158 H77 V181.5 H52 L48 158 H34 V137 Z M81 91 H116 Q120 91 120 95 V137 H77 V95 Q77 91 81 91 Z" fill-rule="evenodd"/><text x="171.6 224.7 274.1" y="162.5" font-family="'Liberation Sans',sans-serif" font-weight="700" font-size="75" stroke="#000" stroke-width="4" stroke-linejoin="round">yug</text><g transform="translate(173.5 43.5) rotate(36)"><path d="M-8.5 -13 L8.5 -13 L10.5 -2 L0 20 L-10.5 -2 Z"/><rect x="-8.5" y="-20.5" width="17" height="6"/></g><path d="M132.6 47.5 C150 44 150 62 157.2 65 C164 70 170 80 182.2 78" fill="none" stroke="#000" stroke-width="1.4"/><circle cx="132.6" cy="47.5" r="2.2"/><circle cx="157.2" cy="65" r="2.2"/><circle cx="182.2" cy="78" r="2.2"/></g><g transform="translate(785 344) rotate(-45) scale(0.53) translate(-98.5 -114.0)" opacity="0.1" fill="#000"><path d="M46 137 V91 Q46 68 69 68 H128 Q151 68 151 91 V137 H164 V158 H151 L147 181.5 H120 V158 H77 V181.5 H52 L48 158 H34 V137 Z M81 91 H116 Q120 91 120 95 V137 H77 V95 Q77 91 81 91 Z" fill-rule="evenodd"/><text x="171.6 224.7 274.1" y="162.5" font-family="'Liberation Sans',sans-serif" font-weight="700" font-size="75" stroke="#000" stroke-width="4" stroke-linejoin="round">yug</text><g transform="translate(173.5 43.5) rotate(36)"><path d="M-8.5 -13 L8.5 -13 L10.5 -2 L0 20 L-10.5 -2 Z"/><rect x="-8.5" y="-20.5" width="17" height="6"/></g><path d="M132.6 47.5 C150 44 150 62 157.2 65 C164 70 170 80 182.2 78" fill="none" stroke="#000" stroke-width="1.4"/><circle cx="132.6" cy="47.5" r="2.2"/><circle cx="157.2" cy="65" r="2.2"/><circle cx="182.2" cy="78" r="2.2"/></g><g transform="translate(1095 368) rotate(-45) scale(0.53) translate(-98.5 -114.0)" opacity="0.1" fill="#000"><path d="M46 137 V91 Q46 68 69 68 H128 Q151 68 151 91 V137 H164 V158 H151 L147 181.5 H120 V158 H77 V181.5 H52 L48 158 H34 V137 Z M81 91 H116 Q120 91 120 95 V137 H77 V95 Q77 91 81 91 Z" fill-rule="evenodd"/><text x="171.6 224.7 274.1" y="162.5" font-family="'Liberation Sans',sans-serif" font-weight="700" font-size="75" stroke="#000" stroke-width="4" stroke-linejoin="round">yug</text><g transform="translate(173.5 43.5) rotate(36)"><path d="M-8.5 -13 L8.5 -13 L10.5 -2 L0 20 L-10.5 -2 Z"/><rect x="-8.5" y="-20.5" width="17" height="6"/></g><path d="M132.6 47.5 C150 44 150 62 157.2 65 C164 70 170 80 182.2 78" fill="none" stroke="#000" stroke-width="1.4"/><circle cx="132.6" cy="47.5" r="2.2"/><circle cx="157.2" cy="65" r="2.2"/><circle cx="182.2" cy="78" r="2.2"/></g><g transform="translate(1397 400) rotate(-45) scale(0.53) translate(-98.5 -114.0)" opacity="0.1" fill="#000"><path d="M46 137 V91 Q46 68 69 68 H128 Q151 68 151 91 V137 H164 V158 H151 L147 181.5 H120 V158 H77 V181.5 H52 L48 158 H34 V137 Z M81 91 H116 Q120 91 120 95 V137 H77 V95 Q77 91 81 91 Z" fill-rule="evenodd"/><text x="171.6 224.7 274.1" y="162.5" font-family="'Liberation Sans',sans-serif" font-weight="700" font-size="75" stroke="#000" stroke-width="4" stroke-linejoin="round">yug</text><g transform="translate(173.5 43.5) rotate(36)"><path d="M-8.5 -13 L8.5 -13 L10.5 -2 L0 20 L-10.5 -2 Z"/><rect x="-8.5" y="-20.5" width="17" height="6"/></g><path d="M132.6 47.5 C150 44 150 62 157.2 65 C164 70 170 80 182.2 78" fill="none" stroke="#000" stroke-width="1.4"/><circle cx="132.6" cy="47.5" r="2.2"/><circle cx="157.2" cy="65" r="2.2"/><circle cx="182.2" cy="78" r="2.2"/></g><g transform="translate(1688 418) rotate(-45) scale(0.53) translate(-98.5 -114.0)" opacity="0.1" fill="#000"><path d="M46 137 V91 Q46 68 69 68 H128 Q151 68 151 91 V137 H164 V158 H151 L147 181.5 H120 V158 H77 V181.5 H52 L48 158 H34 V137 Z M81 91 H116 Q120 91 120 95 V137 H77 V95 Q77 91 81 91 Z" fill-rule="evenodd"/><text x="171.6 224.7 274.1" y="162.5" font-family="'Liberation Sans',sans-serif" font-weight="700" font-size="75" stroke="#000" stroke-width="4" stroke-linejoin="round">yug</text><g transform="translate(173.5 43.5) rotate(36)"><path d="M-8.5 -13 L8.5 -13 L10.5 -2 L0 20 L-10.5 -2 Z"/><rect x="-8.5" y="-20.5" width="17" height="6"/></g><path d="M132.6 47.5 C150 44 150 62 157.2 65 C164 70 170 80 182.2 78" fill="none" stroke="#000" stroke-width="1.4"/><circle cx="132.6" cy="47.5" r="2.2"/><circle cx="157.2" cy="65" r="2.2"/><circle cx="182.2" cy="78" r="2.2"/></g><g transform="translate(-75 561) rotate(-45) scale(0.53) translate(-98.5 -114.0)" opacity="0.1" fill="#000"><path d="M46 137 V91 Q46 68 69 68 H128 Q151 68 151 91 V137 H164 V158 H151 L147 181.5 H120 V158 H77 V181.5 H52 L48 158 H34 V137 Z M81 91 H116 Q120 91 120 95 V137 H77 V95 Q77 91 81 91 Z" fill-rule="evenodd"/><text x="171.6 224.7 274.1" y="162.5" font-family="'Liberation Sans',sans-serif" font-weight="700" font-size="75" stroke="#000" stroke-width="4" stroke-linejoin="round">yug</text><g transform="translate(173.5 43.5) rotate(36)"><path d="M-8.5 -13 L8.5 -13 L10.5 -2 L0 20 L-10.5 -2 Z"/><rect x="-8.5" y="-20.5" width="17" height="6"/></g><path d="M132.6 47.5 C150 44 150 62 157.2 65 C164 70 170 80 182.2 78" fill="none" stroke="#000" stroke-width="1.4"/><circle cx="132.6" cy="47.5" r="2.2"/><circle cx="157.2" cy="65" r="2.2"/><circle cx="182.2" cy="78" r="2.2"/></g><g transform="translate(225.5 589) rotate(-45) scale(0.53) translate(-98.5 -114.0)" opacity="0.1" fill="#000"><path d="M46 137 V91 Q46 68 69 68 H128 Q151 68 151 91 V137 H164 V158 H151 L147 181.5 H120 V158 H77 V181.5 H52 L48 158 H34 V137 Z M81 91 H116 Q120 91 120 95 V137 H77 V95 Q77 91 81 91 Z" fill-rule="evenodd"/><text x="171.6 224.7 274.1" y="162.5" font-family="'Liberation Sans',sans-serif" font-weight="700" font-size="75" stroke="#000" stroke-width="4" stroke-linejoin="round">yug</text><g transform="translate(173.5 43.5) rotate(36)"><path d="M-8.5 -13 L8.5 -13 L10.5 -2 L0 20 L-10.5 -2 Z"/><rect x="-8.5" y="-20.5" width="17" height="6"/></g><path d="M132.6 47.5 C150 44 150 62 157.2 65 C164 70 170 80 182.2 78" fill="none" stroke="#000" stroke-width="1.4"/><circle cx="132.6" cy="47.5" r="2.2"/><circle cx="157.2" cy="65" r="2.2"/><circle cx="182.2" cy="78" r="2.2"/></g><g transform="translate(526.7 620) rotate(-45) scale(0.53) translate(-98.5 -114.0)" opacity="0.1" fill="#000"><path d="M46 137 V91 Q46 68 69 68 H128 Q151 68 151 91 V137 H164 V158 H151 L147 181.5 H120 V158 H77 V181.5 H52 L48 158 H34 V137 Z M81 91 H116 Q120 91 120 95 V137 H77 V95 Q77 91 81 91 Z" fill-rule="evenodd"/><text x="171.6 224.7 274.1" y="162.5" font-family="'Liberation Sans',sans-serif" font-weight="700" font-size="75" stroke="#000" stroke-width="4" stroke-linejoin="round">yug</text><g transform="translate(173.5 43.5) rotate(36)"><path d="M-8.5 -13 L8.5 -13 L10.5 -2 L0 20 L-10.5 -2 Z"/><rect x="-8.5" y="-20.5" width="17" height="6"/></g><path d="M132.6 47.5 C150 44 150 62 157.2 65 C164 70 170 80 182.2 78" fill="none" stroke="#000" stroke-width="1.4"/><circle cx="132.6" cy="47.5" r="2.2"/><circle cx="157.2" cy="65" r="2.2"/><circle cx="182.2" cy="78" r="2.2"/></g><g transform="translate(815.5 647.5) rotate(-45) scale(0.53) translate(-98.5 -114.0)" opacity="0.1" fill="#000"><path d="M46 137 V91 Q46 68 69 68 H128 Q151 68 151 91 V137 H164 V158 H151 L147 181.5 H120 V158 H77 V181.5 H52 L48 158 H34 V137 Z M81 91 H116 Q120 91 120 95 V137 H77 V95 Q77 91 81 91 Z" fill-rule="evenodd"/><text x="171.6 224.7 274.1" y="162.5" font-family="'Liberation Sans',sans-serif" font-weight="700" font-size="75" stroke="#000" stroke-width="4" stroke-linejoin="round">yug</text><g transform="translate(173.5 43.5) rotate(36)"><path d="M-8.5 -13 L8.5 -13 L10.5 -2 L0 20 L-10.5 -2 Z"/><rect x="-8.5" y="-20.5" width="17" height="6"/></g><path d="M132.6 47.5 C150 44 150 62 157.2 65 C164 70 170 80 182.2 78" fill="none" stroke="#000" stroke-width="1.4"/><circle cx="132.6" cy="47.5" r="2.2"/><circle cx="157.2" cy="65" r="2.2"/><circle cx="182.2" cy="78" r="2.2"/></g><g transform="translate(1116 675) rotate(-45) scale(0.53) translate(-98.5 -114.0)" opacity="0.1" fill="#000"><path d="M46 137 V91 Q46 68 69 68 H128 Q151 68 151 91 V137 H164 V158 H151 L147 181.5 H120 V158 H77 V181.5 H52 L48 158 H34 V137 Z M81 91 H116 Q120 91 120 95 V137 H77 V95 Q77 91 81 91 Z" fill-rule="evenodd"/><text x="171.6 224.7 274.1" y="162.5" font-family="'Liberation Sans',sans-serif" font-weight="700" font-size="75" stroke="#000" stroke-width="4" stroke-linejoin="round">yug</text><g transform="translate(173.5 43.5) rotate(36)"><path d="M-8.5 -13 L8.5 -13 L10.5 -2 L0 20 L-10.5 -2 Z"/><rect x="-8.5" y="-20.5" width="17" height="6"/></g><path d="M132.6 47.5 C150 44 150 62 157.2 65 C164 70 170 80 182.2 78" fill="none" stroke="#000" stroke-width="1.4"/><circle cx="132.6" cy="47.5" r="2.2"/><circle cx="157.2" cy="65" r="2.2"/><circle cx="182.2" cy="78" r="2.2"/></g><g transform="translate(1412.5 697.5) rotate(-45) scale(0.53) translate(-98.5 -114.0)" opacity="0.1" fill="#000"><path d="M46 137 V91 Q46 68 69 68 H128 Q151 68 151 91 V137 H164 V158 H151 L147 181.5 H120 V158 H77 V181.5 H52 L48 158 H34 V137 Z M81 91 H116 Q120 91 120 95 V137 H77 V95 Q77 91 81 91 Z" fill-rule="evenodd"/><text x="171.6 224.7 274.1" y="162.5" font-family="'Liberation Sans',sans-serif" font-weight="700" font-size="75" stroke="#000" stroke-width="4" stroke-linejoin="round">yug</text><g transform="translate(173.5 43.5) rotate(36)"><path d="M-8.5 -13 L8.5 -13 L10.5 -2 L0 20 L-10.5 -2 Z"/><rect x="-8.5" y="-20.5" width="17" height="6"/></g><path d="M132.6 47.5 C150 44 150 62 157.2 65 C164 70 170 80 182.2 78" fill="none" stroke="#000" stroke-width="1.4"/><circle cx="132.6" cy="47.5" r="2.2"/><circle cx="157.2" cy="65" r="2.2"/><circle cx="182.2" cy="78" r="2.2"/></g><g transform="translate(1730 722) rotate(-45) scale(0.53) translate(-98.5 -114.0)" opacity="0.1" fill="#000"><path d="M46 137 V91 Q46 68 69 68 H128 Q151 68 151 91 V137 H164 V158 H151 L147 181.5 H120 V158 H77 V181.5 H52 L48 158 H34 V137 Z M81 91 H116 Q120 91 120 95 V137 H77 V95 Q77 91 81 91 Z" fill-rule="evenodd"/><text x="171.6 224.7 274.1" y="162.5" font-family="'Liberation Sans',sans-serif" font-weight="700" font-size="75" stroke="#000" stroke-width="4" stroke-linejoin="round">yug</text><g transform="translate(173.5 43.5) rotate(36)"><path d="M-8.5 -13 L8.5 -13 L10.5 -2 L0 20 L-10.5 -2 Z"/><rect x="-8.5" y="-20.5" width="17" height="6"/></g><path d="M132.6 47.5 C150 44 150 62 157.2 65 C164 70 170 80 182.2 78" fill="none" stroke="#000" stroke-width="1.4"/><circle cx="132.6" cy="47.5" r="2.2"/><circle cx="157.2" cy="65" r="2.2"/><circle cx="182.2" cy="78" r="2.2"/></g><g transform="translate(-64 879) rotate(-45) scale(0.53) translate(-98.5 -114.0)" opacity="0.1" fill="#000"><path d="M46 137 V91 Q46 68 69 68 H128 Q151 68 151 91 V137 H164 V158 H151 L147 181.5 H120 V158 H77 V181.5 H52 L48 158 H34 V137 Z M81 91 H116 Q120 91 120 95 V137 H77 V95 Q77 91 81 91 Z" fill-rule="evenodd"/><text x="171.6 224.7 274.1" y="162.5" font-family="'Liberation Sans',sans-serif" font-weight="700" font-size="75" stroke="#000" stroke-width="4" stroke-linejoin="round">yug</text><g transform="translate(173.5 43.5) rotate(36)"><path d="M-8.5 -13 L8.5 -13 L10.5 -2 L0 20 L-10.5 -2 Z"/><rect x="-8.5" y="-20.5" width="17" height="6"/></g><path d="M132.6 47.5 C150 44 150 62 157.2 65 C164 70 170 80 182.2 78" fill="none" stroke="#000" stroke-width="1.4"/><circle cx="132.6" cy="47.5" r="2.2"/><circle cx="157.2" cy="65" r="2.2"/><circle cx="182.2" cy="78" r="2.2"/></g><g transform="translate(236 907.5) rotate(-45) scale(0.53) translate(-98.5 -114.0)" opacity="0.1" fill="#000"><path d="M46 137 V91 Q46 68 69 68 H128 Q151 68 151 91 V137 H164 V158 H151 L147 181.5 H120 V158 H77 V181.5 H52 L48 158 H34 V137 Z M81 91 H116 Q120 91 120 95 V137 H77 V95 Q77 91 81 91 Z" fill-rule="evenodd"/><text x="171.6 224.7 274.1" y="162.5" font-family="'Liberation Sans',sans-serif" font-weight="700" font-size="75" stroke="#000" stroke-width="4" stroke-linejoin="round">yug</text><g transform="translate(173.5 43.5) rotate(36)"><path d="M-8.5 -13 L8.5 -13 L10.5 -2 L0 20 L-10.5 -2 Z"/><rect x="-8.5" y="-20.5" width="17" height="6"/></g><path d="M132.6 47.5 C150 44 150 62 157.2 65 C164 70 170 80 182.2 78" fill="none" stroke="#000" stroke-width="1.4"/><circle cx="132.6" cy="47.5" r="2.2"/><circle cx="157.2" cy="65" r="2.2"/><circle cx="182.2" cy="78" r="2.2"/></g><g transform="translate(551 910.4) rotate(-45) scale(0.53) translate(-98.5 -114.0)" opacity="0.1" fill="#000"><path d="M46 137 V91 Q46 68 69 68 H128 Q151 68 151 91 V137 H164 V158 H151 L147 181.5 H120 V158 H77 V181.5 H52 L48 158 H34 V137 Z M81 91 H116 Q120 91 120 95 V137 H77 V95 Q77 91 81 91 Z" fill-rule="evenodd"/><text x="171.6 224.7 274.1" y="162.5" font-family="'Liberation Sans',sans-serif" font-weight="700" font-size="75" stroke="#000" stroke-width="4" stroke-linejoin="round">yug</text><g transform="translate(173.5 43.5) rotate(36)"><path d="M-8.5 -13 L8.5 -13 L10.5 -2 L0 20 L-10.5 -2 Z"/><rect x="-8.5" y="-20.5" width="17" height="6"/></g><path d="M132.6 47.5 C150 44 150 62 157.2 65 C164 70 170 80 182.2 78" fill="none" stroke="#000" stroke-width="1.4"/><circle cx="132.6" cy="47.5" r="2.2"/><circle cx="157.2" cy="65" r="2.2"/><circle cx="182.2" cy="78" r="2.2"/></g><g transform="translate(856.2 944) rotate(-45) scale(0.53) translate(-98.5 -114.0)" opacity="0.1" fill="#000"><path d="M46 137 V91 Q46 68 69 68 H128 Q151 68 151 91 V137 H164 V158 H151 L147 181.5 H120 V158 H77 V181.5 H52 L48 158 H34 V137 Z M81 91 H116 Q120 91 120 95 V137 H77 V95 Q77 91 81 91 Z" fill-rule="evenodd"/><text x="171.6 224.7 274.1" y="162.5" font-family="'Liberation Sans',sans-serif" font-weight="700" font-size="75" stroke="#000" stroke-width="4" stroke-linejoin="round">yug</text><g transform="translate(173.5 43.5) rotate(36)"><path d="M-8.5 -13 L8.5 -13 L10.5 -2 L0 20 L-10.5 -2 Z"/><rect x="-8.5" y="-20.5" width="17" height="6"/></g><path d="M132.6 47.5 C150 44 150 62 157.2 65 C164 70 170 80 182.2 78" fill="none" stroke="#000" stroke-width="1.4"/><circle cx="132.6" cy="47.5" r="2.2"/><circle cx="157.2" cy="65" r="2.2"/><circle cx="182.2" cy="78" r="2.2"/></g><g transform="translate(1137.5 975) rotate(-45) scale(0.53) translate(-98.5 -114.0)" opacity="0.1" fill="#000"><path d="M46 137 V91 Q46 68 69 68 H128 Q151 68 151 91 V137 H164 V158 H151 L147 181.5 H120 V158 H77 V181.5 H52 L48 158 H34 V137 Z M81 91 H116 Q120 91 120 95 V137 H77 V95 Q77 91 81 91 Z" fill-rule="evenodd"/><text x="171.6 224.7 274.1" y="162.5" font-family="'Liberation Sans',sans-serif" font-weight="700" font-size="75" stroke="#000" stroke-width="4" stroke-linejoin="round">yug</text><g transform="translate(173.5 43.5) rotate(36)"><path d="M-8.5 -13 L8.5 -13 L10.5 -2 L0 20 L-10.5 -2 Z"/><rect x="-8.5" y="-20.5" width="17" height="6"/></g><path d="M132.6 47.5 C150 44 150 62 157.2 65 C164 70 170 80 182.2 78" fill="none" stroke="#000" stroke-width="1.4"/><circle cx="132.6" cy="47.5" r="2.2"/><circle cx="157.2" cy="65" r="2.2"/><circle cx="182.2" cy="78" r="2.2"/></g><g transform="translate(1435 995) rotate(-45) scale(0.53) translate(-98.5 -114.0)" opacity="0.1" fill="#000"><path d="M46 137 V91 Q46 68 69 68 H128 Q151 68 151 91 V137 H164 V158 H151 L147 181.5 H120 V158 H77 V181.5 H52 L48 158 H34 V137 Z M81 91 H116 Q120 91 120 95 V137 H77 V95 Q77 91 81 91 Z" fill-rule="evenodd"/><text x="171.6 224.7 274.1" y="162.5" font-family="'Liberation Sans',sans-serif" font-weight="700" font-size="75" stroke="#000" stroke-width="4" stroke-linejoin="round">yug</text><g transform="translate(173.5 43.5) rotate(36)"><path d="M-8.5 -13 L8.5 -13 L10.5 -2 L0 20 L-10.5 -2 Z"/><rect x="-8.5" y="-20.5" width="17" height="6"/></g><path d="M132.6 47.5 C150 44 150 62 157.2 65 C164 70 170 80 182.2 78" fill="none" stroke="#000" stroke-width="1.4"/><circle cx="132.6" cy="47.5" r="2.2"/><circle cx="157.2" cy="65" r="2.2"/><circle cx="182.2" cy="78" r="2.2"/></g><g transform="translate(1750 1020) rotate(-45) scale(0.53) translate(-98.5 -114.0)" opacity="0.1" fill="#000"><path d="M46 137 V91 Q46 68 69 68 H128 Q151 68 151 91 V137 H164 V158 H151 L147 181.5 H120 V158 H77 V181.5 H52 L48 158 H34 V137 Z M81 91 H116 Q120 91 120 95 V137 H77 V95 Q77 91 81 91 Z" fill-rule="evenodd"/><text x="171.6 224.7 274.1" y="162.5" font-family="'Liberation Sans',sans-serif" font-weight="700" font-size="75" stroke="#000" stroke-width="4" stroke-linejoin="round">yug</text><g transform="translate(173.5 43.5) rotate(36)"><path d="M-8.5 -13 L8.5 -13 L10.5 -2 L0 20 L-10.5 -2 Z"/><rect x="-8.5" y="-20.5" width="17" height="6"/></g><path d="M132.6 47.5 C150 44 150 62 157.2 65 C164 70 170 80 182.2 78" fill="none" stroke="#000" stroke-width="1.4"/><circle cx="132.6" cy="47.5" r="2.2"/><circle cx="157.2" cy="65" r="2.2"/><circle cx="182.2" cy="78" r="2.2"/></g><g transform="translate(260 1205) rotate(-45) scale(0.53) translate(-98.5 -114.0)" opacity="0.1" fill="#000"><path d="M46 137 V91 Q46 68 69 68 H128 Q151 68 151 91 V137 H164 V158 H151 L147 181.5 H120 V158 H77 V181.5 H52 L48 158 H34 V137 Z M81 91 H116 Q120 91 120 95 V137 H77 V95 Q77 91 81 91 Z" fill-rule="evenodd"/><text x="171.6 224.7 274.1" y="162.5" font-family="'Liberation Sans',sans-serif" font-weight="700" font-size="75" stroke="#000" stroke-width="4" stroke-linejoin="round">yug</text><g transform="translate(173.5 43.5) rotate(36)"><path d="M-8.5 -13 L8.5 -13 L10.5 -2 L0 20 L-10.5 -2 Z"/><rect x="-8.5" y="-20.5" width="17" height="6"/></g><path d="M132.6 47.5 C150 44 150 62 157.2 65 C164 70 170 80 182.2 78" fill="none" stroke="#000" stroke-width="1.4"/><circle cx="132.6" cy="47.5" r="2.2"/><circle cx="157.2" cy="65" r="2.2"/><circle cx="182.2" cy="78" r="2.2"/></g><g transform="translate(580 1212) rotate(-45) scale(0.53) translate(-98.5 -114.0)" opacity="0.1" fill="#000"><path d="M46 137 V91 Q46 68 69 68 H128 Q151 68 151 91 V137 H164 V158 H151 L147 181.5 H120 V158 H77 V181.5 H52 L48 158 H34 V137 Z M81 91 H116 Q120 91 120 95 V137 H77 V95 Q77 91 81 91 Z" fill-rule="evenodd"/><text x="171.6 224.7 274.1" y="162.5" font-family="'Liberation Sans',sans-serif" font-weight="700" font-size="75" stroke="#000" stroke-width="4" stroke-linejoin="round">yug</text><g transform="translate(173.5 43.5) rotate(36)"><path d="M-8.5 -13 L8.5 -13 L10.5 -2 L0 20 L-10.5 -2 Z"/><rect x="-8.5" y="-20.5" width="17" height="6"/></g><path d="M132.6 47.5 C150 44 150 62 157.2 65 C164 70 170 80 182.2 78" fill="none" stroke="#000" stroke-width="1.4"/><circle cx="132.6" cy="47.5" r="2.2"/><circle cx="157.2" cy="65" r="2.2"/><circle cx="182.2" cy="78" r="2.2"/></g><g transform="translate(880 1245) rotate(-45) scale(0.53) translate(-98.5 -114.0)" opacity="0.1" fill="#000"><path d="M46 137 V91 Q46 68 69 68 H128 Q151 68 151 91 V137 H164 V158 H151 L147 181.5 H120 V158 H77 V181.5 H52 L48 158 H34 V137 Z M81 91 H116 Q120 91 120 95 V137 H77 V95 Q77 91 81 91 Z" fill-rule="evenodd"/><text x="171.6 224.7 274.1" y="162.5" font-family="'Liberation Sans',sans-serif" font-weight="700" font-size="75" stroke="#000" stroke-width="4" stroke-linejoin="round">yug</text><g transform="translate(173.5 43.5) rotate(36)"><path d="M-8.5 -13 L8.5 -13 L10.5 -2 L0 20 L-10.5 -2 Z"/><rect x="-8.5" y="-20.5" width="17" height="6"/></g><path d="M132.6 47.5 C150 44 150 62 157.2 65 C164 70 170 80 182.2 78" fill="none" stroke="#000" stroke-width="1.4"/><circle cx="132.6" cy="47.5" r="2.2"/><circle cx="157.2" cy="65" r="2.2"/><circle cx="182.2" cy="78" r="2.2"/></g></svg>
<svg style="left:0;top:0;pointer-events:none" width="360" height="220" viewBox="0 0 360 220"><defs><linearGradient id="lgA" x1="0" y1="68" x2="0" y2="182" gradientUnits="userSpaceOnUse"><stop offset="0" stop-color="#14b6ff"/><stop offset="0.5" stop-color="#5a76ff"/><stop offset="1" stop-color="#b72dff"/></linearGradient><linearGradient id="lgY" x1="0" y1="120" x2="0" y2="184" gradientUnits="userSpaceOnUse"><stop offset="0" stop-color="#ffc814"/><stop offset="0.55" stop-color="#ffa412"/><stop offset="1" stop-color="#ff8410"/></linearGradient><filter id="glW" x="-20%" y="-20%" width="140%" height="140%"><feGaussianBlur in="SourceAlpha" stdDeviation="3.2" result="b"/><feFlood flood-color="#ffffff" flood-opacity="0.95"/><feComposite in2="b" operator="in" result="g"/><feMerge><feMergeNode in="g"/><feMergeNode in="g"/><feMergeNode in="SourceGraphic"/></feMerge></filter><filter id="glY" x="-20%" y="-30%" width="140%" height="160%"><feGaussianBlur in="SourceAlpha" stdDeviation="3.4" result="b"/><feFlood flood-color="#ffc860" flood-opacity="0.9"/><feComposite in2="b" operator="in" result="g"/><feMerge><feMergeNode in="g"/><feMergeNode in="g"/><feMergeNode in="SourceGraphic"/></feMerge></filter><filter id="glN" x="-40%" y="-40%" width="180%" height="180%"><feGaussianBlur in="SourceAlpha" stdDeviation="2.2" result="b"/><feFlood flood-color="#ffffff" flood-opacity="0.8"/><feComposite in2="b" operator="in" result="g"/><feMerge><feMergeNode in="g"/><feMergeNode in="SourceGraphic"/></feMerge></filter></defs><path d="M46 137 V91 Q46 68 69 68 H128 Q151 68 151 91 V137 H164 V158 H151 L147 181.5 H120 V158 H77 V181.5 H52 L48 158 H34 V137 Z M81 91 H116 Q120 91 120 95 V137 H77 V95 Q77 91 81 91 Z" fill="url(#lgA)" fill-rule="evenodd" filter="url(#glW)"/><text x="171.6 224.7 274.1" y="162.5" font-family="'Liberation Sans',sans-serif" font-weight="700" font-size="75" fill="url(#lgY)" stroke="url(#lgY)" stroke-width="3.4" stroke-linejoin="round" filter="url(#glY)">yug</text><path d="M156.5 45 V82" stroke="#4a5f8a" stroke-width="0.8" opacity="0.7"/><path d="M132.6 47.5 C150 44 150 62 157.2 65 C164 70 170 80 182.2 78" fill="none" stroke="#5f7fb8" stroke-width="1"/><g filter="url(#glN)"><circle cx="132.6" cy="47.5" r="2" fill="#fff"/><circle cx="157.2" cy="65" r="2" fill="#fff"/><circle cx="182.2" cy="78" r="2" fill="#fff"/></g><g transform="translate(173.5 43.5) rotate(36)" filter="url(#glN)"><path d="M-8.5 -13 L0 -13 L0 20 L-10.5 -2 Z" fill="#9a3cf5"/><path d="M8.5 -13 L0 -13 L0 20 L10.5 -2 Z" fill="#3d86f5"/><rect x="-8.5" y="-17.5" width="17" height="4.8" fill="#ff9c1c"/><rect x="-7.5" y="-20.5" width="15" height="3.2" fill="#3a8fe8"/><path d="M0 -2 L0 19" stroke="#ffffff" stroke-width="1.2"/><circle cx="0" cy="-3" r="2.4" fill="#ffffff"/></g></svg>
<svg style="left:845px;top:1003px;pointer-events:none" width="52" height="52" viewBox="845 1003 52 52"><defs><linearGradient id="lgB" x1="0" y1="1022" x2="0" y2="1042" gradientUnits="userSpaceOnUse"><stop offset="0" stop-color="#24b0ff"/><stop offset="1" stop-color="#b43cff"/></linearGradient></defs><circle cx="871" cy="1029" r="22" fill="#fdb616"/><g transform="translate(868.5 1031.8) scale(0.175) translate(-99 -125)"><path d="M46 137 V91 Q46 68 69 68 H128 Q151 68 151 91 V137 H164 V158 H151 L147 181.5 H120 V158 H77 V181.5 H52 L48 158 H34 V137 Z M81 91 H116 Q120 91 120 95 V137 H77 V95 Q77 91 81 91 Z" fill="url(#lgA)" fill-rule="evenodd"/></g><g transform="translate(883 1016.5) rotate(36) scale(0.19)"><path d="M-8.5 -13 L0 -13 L0 20 L-10.5 -2 Z" fill="#8a3cf0"/><path d="M8.5 -13 L0 -13 L0 20 L10.5 -2 Z" fill="#5a6af0"/><rect x="-8.5" y="-17.5" width="17" height="4.8" fill="#ff7a1c"/><rect x="-7.5" y="-20.5" width="15" height="3.2" fill="#5a6af0"/><path d="M0 -2 L0 19" stroke="#fff" stroke-width="1.2"/><circle cx="0" cy="-3" r="2.4" fill="#fff"/></g><path d="M877 1022 L881 1019" stroke="#fff" stroke-width="0.6" opacity="0.8"/></svg>
<span class="t" style="left:903.0px;top:1017.5px;font-size:27px;line-height:27px;color:#ffffff;font-weight:700;letter-spacing:0.100px;text-shadow:0 1px 2px rgba(0,0,0,0.45);">www.toonyug.com</span>
<div class="b" style="left:0;top:1078px;width:1920px;height:2px;background:#3a94cf"></div>
</div>
</body></html>
